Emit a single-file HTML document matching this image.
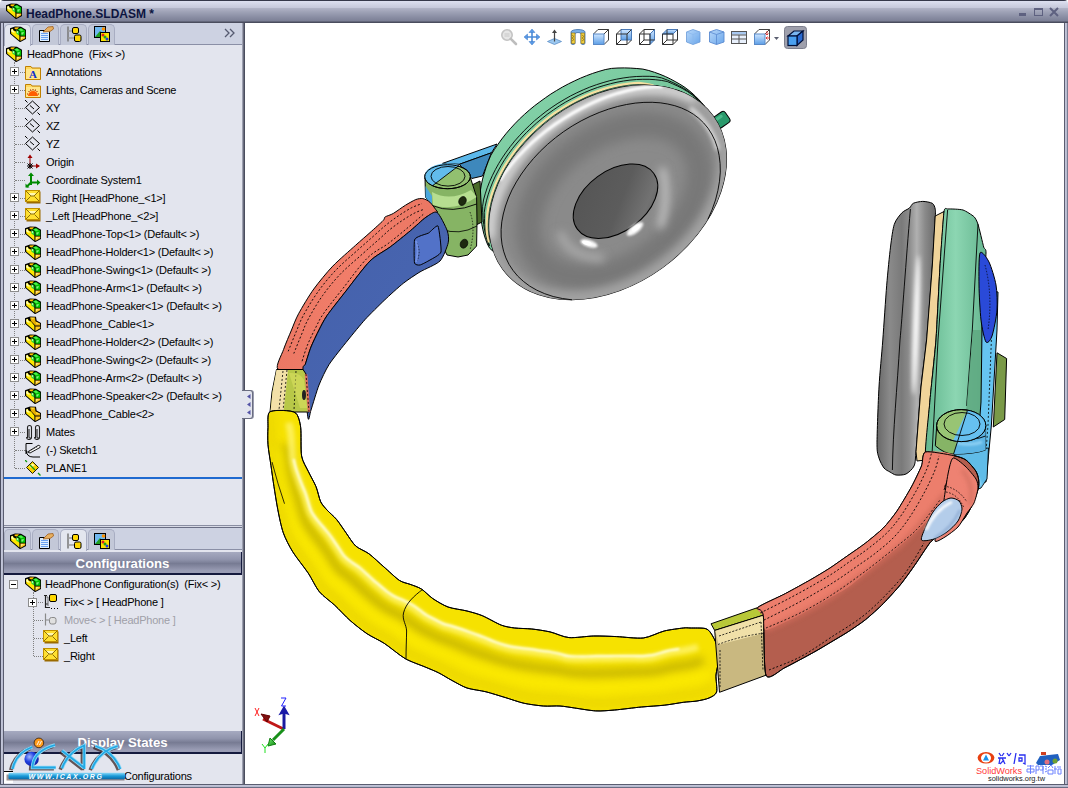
<!DOCTYPE html>
<html><head><meta charset="utf-8">
<style>
*{margin:0;padding:0;box-sizing:border-box}
html,body{width:1068px;height:788px;overflow:hidden;background:#fff}
body{position:relative;font-family:"Liberation Sans",sans-serif;font-size:11px;color:#000}
.a{position:absolute}
svg.a{overflow:visible}
#title{left:0;top:0;width:1068px;height:23px;background:linear-gradient(#35384a 0,#35384a 1px,#dde0f0 1px,#d2d5e6 4px,#c6c9db 7.5px,#afb2c5 8.5px,#9ea2b6 12px,#8a8ea4 17px,#7c8096 21px,#4a4d5e 22px,#4a4d5e 23px);border-radius:4px 4px 0 0}
#title .t{left:26px;top:7px;font-weight:bold;font-size:12px;color:#0d1440}
#lb{left:0;top:23px;width:4px;height:765px;background:linear-gradient(90deg,#4a4d60 0,#4a4d60 1px,#c4c7da 1px,#b8bcd0 3px,#5a5d70 3px)}
#panel{left:4px;top:23px;width:238px;height:761px;background:#e3e5ee}
#pr{left:242px;top:23px;width:3px;height:761px;background:linear-gradient(90deg,#b0b3c3,#8a8d9e 1px,#4a4d5e 2px)}
#bb{left:0;top:784px;width:1068px;height:4px;background:linear-gradient(#5a5d70 0,#5a5d70 1px,#c4c7da 1px,#b4b8cc 3px,#6a6e84 3px)}
#rb{left:1064px;top:23px;width:4px;height:765px;background:linear-gradient(90deg,#5a5d70 0,#5a5d70 1px,#c4c7da 1px,#b4b8cc 3px,#7a7e94 3px)}
.tabs{left:4px;width:238px;height:22px;background:#cdd2e2;border-bottom:1px solid #8a8fa6}
.tab{position:absolute;width:27px;height:21px;border-radius:5px 5px 0 0;background:#c3c8d8;border:1px solid #a8adc2;border-bottom:none}
.tab.on{background:#e3e6ef;height:22px}
.row{position:absolute;white-space:pre;line-height:13px;height:13px;letter-spacing:-0.22px}
.hdr{left:4px;width:238px;height:23px;background:linear-gradient(#a6aac0,#9195ad 35%,#777b93 55%,#9a9db5 90%);border-bottom:2px solid #151a3e;border-right:1px solid #151a3e;color:#fff;font-weight:bold;font-size:13.2px;text-align:center;line-height:23px}
#view{left:245px;top:23px;width:819px;height:761px;background:#fff;overflow:hidden}

</style></head><body>
<svg width="0" height="0" style="position:absolute">
<symbol id="i-asm" viewBox="0 0 16 16">
 <path d="M0 2.2 L5 0.4 L11 0.8 L16.2 3.8 L16.2 12.8 L10 16.2 L0 7.8Z" fill="#000"/>
 <path d="M1.2 3.4 L2.8 2.8 L3.6 4.6 L6 5.6 L9.4 9.8 L9.4 14.6 L1.2 7.4Z" fill="#ffe600"/>
 <path d="M1.2 3.6 L2.6 3.1 L3.2 4.8 L5 6.5 L3 6.5 L1.2 5.5Z" fill="#ffffb0"/>
 <path d="M4.6 1.4 L9 1.3 L7.2 3.6 L4.6 3Z" fill="#ffc400"/>
 <path d="M6.4 4 L9.4 5.8 L9.4 9.6 L6.4 7.8Z" fill="#30d830"/>
 <path d="M6.8 4.8 L8 5.6 L8 7.2 L6.8 6.6Z" fill="#c0ffc0"/>
 <path d="M7.4 3.2 L11 1.9 L15.2 4.4 L15.2 9.8 L10.4 9.8 L10.4 5.9Z" fill="#00c000"/>
 <path d="M8.6 3.4 L11 2.6 L13.6 4.2 L11.2 5.2Z" fill="#50ee50"/>
 <path d="M11.4 6.6 L14 6 L13 8.4 L11.4 8.6Z" fill="#a0ffa0" opacity="0.8"/>
 <path d="M10.4 10.6 L15.2 10.6 L15.2 12.3 L10.4 15Z" fill="#ffc820"/>
 <path d="M11 11.2 L14 11.2 L11 13Z" fill="#ffeea0"/>
</symbol>
<symbol id="i-part" viewBox="0 0 16 16">
 <path d="M0 2.2 L5 0.4 L11 0.8 L11.6 4.5 L16.2 7 L16.2 12.8 L10 16.2 L0 7.8Z" fill="#000"/>
 <path d="M1.2 3.4 L2.8 2.8 L3.6 4.6 L6 5.6 L9.4 9.8 L9.4 14.6 L1.2 7.4Z" fill="#ffe600"/>
 <path d="M1.2 3.6 L2.6 3.1 L3.2 4.8 L5 6.5 L3 6.5 L1.2 5.5Z" fill="#ffffb0"/>
 <path d="M5 1.4 L10 1.5 L10.4 5.2 L15 7.6 L15.2 9.6 L10.4 9.6 L6 5Z" fill="#e8b000"/>
 <path d="M5.4 1.6 L9.6 1.7 L7.6 3.6Z M10.8 6 L14.8 7.8 L11.4 8.4Z" fill="#ffd840"/>
 <path d="M10.4 10.4 L15.2 10.4 L15.2 12.3 L10.4 15Z" fill="#ffc820"/>
</symbol>
<symbol id="i-plane" viewBox="0 0 16 16">
 <path d="M7.5 1 L14.5 7.5 L7.5 14 L0.5 7.5Z" fill="none" stroke="#000" stroke-width="1"/>
 <path d="M0 0 L2.5 2.5 M5 5.5 L9 9 M12.5 12.5 L15 15" stroke="#000" stroke-width="1"/>
</symbol>
<symbol id="i-folderA" viewBox="0 0 16 16">
 <path d="M0.5 2.5 L6 2.5 L7 4 L15.5 4 L15.5 15.5 L0.5 15.5Z" fill="#ffd860" stroke="#c08000" stroke-width="1"/>
 <path d="M1 5 L15 5 L15 15 L1 15Z" fill="#ffe68a"/>
 <text x="8" y="14" font-family="Liberation Serif" font-weight="bold" font-size="11" fill="#1030d0" text-anchor="middle">A</text>
</symbol>
<symbol id="i-folderL" viewBox="0 0 16 16">
 <path d="M0.5 2.5 L6 2.5 L7 4 L15.5 4 L15.5 15.5 L0.5 15.5Z" fill="#ffd860" stroke="#c08000" stroke-width="1"/>
 <path d="M1 5 L15 5 L15 15 L1 15Z" fill="#ffe68a"/>
 <path d="M3 14 A5 5 0 0 1 13 14Z" fill="#ff6000"/>
 <path d="M8 7 L8 8.5 M3.5 9 L4.5 10 M12.5 9 L11.5 10 M2 12 L3 12 M13 12 L14 12 M5.5 7.5 L6 9 M10.5 7.5 L10 9" stroke="#a02000" stroke-width="1"/>
</symbol>
<symbol id="i-origin" viewBox="0 0 16 16">
 <path d="M5 14 L5 2" stroke="#900000" stroke-width="1"/>
 <path d="M2.5 4 L5 0.5 L7.5 4Z" fill="#a00000"/>
 <path d="M5 12 L14 12" stroke="#900000" stroke-width="1"/>
 <path d="M11 9.5 L15 12 L11 14.5Z" fill="#a00000"/>
 <path d="M2.5 9.5 L7.5 14.5 M7.5 9.5 L2.5 14.5 M5 9 L5 15 M2 12 L8 12" stroke="#000" stroke-width="1"/>
</symbol>
<symbol id="i-coord" viewBox="0 0 16 16">
 <path d="M6 13 L6 3 M6 10.5 L14 10.5 M6 10.5 L1.5 15" stroke="#008a00" stroke-width="2"/>
 <path d="M3 4 L6 0.5 L9 4Z M12 7.5 L15.5 10.5 L12 13.5Z M0.5 11.5 L0.5 15.5 L4.5 15.5Z" fill="#008a00"/>
</symbol>
<symbol id="i-env" viewBox="0 0 16 16">
 <rect x="1.5" y="1.5" width="14" height="12" fill="#9a6a00"/>
 <rect x="0.5" y="0.5" width="14" height="11" fill="#ffe030" stroke="#c09000" stroke-width="1"/>
 <path d="M3 3 L11 3 L9 6 L5 6Z" fill="#fff8b0"/>
 <path d="M1 1 L6 6 L9 6 L14 1 M1 11 L5.5 6.5 M14 11 L9.5 6.5" stroke="#806000" stroke-width="0.9" fill="none"/>
</symbol>
<symbol id="i-mates" viewBox="0 0 16 16">
 <path d="M2.5 14 L2.5 3.5 A2 2 0 0 1 6.5 3.5 L6.5 13 A1.2 1.2 0 0 1 4 13 L4 5" fill="none" stroke="#222" stroke-width="1.1"/>
 <path d="M10.5 14 L10.5 3.5 A2 2 0 0 1 14.5 3.5 L14.5 13 A1.2 1.2 0 0 1 12 13 L12 5" fill="none" stroke="#222" stroke-width="1.1"/>
 <path d="M1.5 13 A2.5 2.5 0 0 0 6.5 13 M9.5 13 A2.5 2.5 0 0 0 14.5 13" fill="none" stroke="#222" stroke-width="1.1"/>
</symbol>
<symbol id="i-sketch" viewBox="0 0 16 16">
 <path d="M1 12 L1 1.5 L7.5 1.5 M1 8 Q1.5 15 8 15 L15 15" fill="none" stroke="#000" stroke-width="1"/>
 <path d="M2.5 10 L13 3.5 A1.5 1.5 0 0 1 15 5.5 L5 11Z" fill="#fff" stroke="#000" stroke-width="0.9"/>
 <path d="M4 9.5 L13 4.5" stroke="#000" stroke-width="0.6" stroke-dasharray="1 1"/>
</symbol>
<symbol id="i-plane1" viewBox="0 0 16 16">
 <path d="M7.5 1.5 L13.5 7.5 L7.5 13.5 L1.5 7.5Z" fill="#f8d000" stroke="#202000" stroke-width="1"/>
 <path d="M4 6 L7.5 3.5 L10 5 L6 8Z" fill="#fff8a0"/>
 <path d="M0 0 L2 2 M5 5 L10 10 M13 13 L15.5 15.5" stroke="#119911" stroke-width="1.3"/>
</symbol>
<symbol id="i-plus" viewBox="0 0 9 9">
 <rect x="0.5" y="0.5" width="8" height="8" fill="#fff" stroke="#8c8c8c" stroke-width="1"/>
 <path d="M2 4.5 L7 4.5 M4.5 2 L4.5 7" stroke="#000" stroke-width="1"/>
</symbol>
<symbol id="i-minus" viewBox="0 0 9 9">
 <rect x="0.5" y="0.5" width="8" height="8" fill="#fff" stroke="#8c8c8c" stroke-width="1"/>
 <path d="M2 4.5 L7 4.5" stroke="#000" stroke-width="1"/>
</symbol>
<symbol id="i-cfg" viewBox="0 0 16 16">
 <path d="M1 1.5 L4 1.5 M2.5 1.5 L2.5 13.5 L7 13.5 M2.5 10 L5 10" fill="none" stroke="#222" stroke-width="1.2"/>
 <path d="M3.5 3 L5 3 L5 12" fill="none" stroke="#666" stroke-width="1"/>
 <rect x="6.5" y="0.5" width="7" height="7" rx="1.5" fill="#ffd800" stroke="#000" stroke-width="1"/>
 <path d="M8 14.5 h1 M11 14.5 h1 M14 14.5 h1" stroke="#000" stroke-width="1.2"/>
</symbol>
<symbol id="i-cfg2" viewBox="0 0 16 16">
 <path d="M2.5 1.5 L2.5 13.5 M2.5 8 L6 8" fill="none" stroke="#8a8a8a" stroke-width="1.2"/>
 <rect x="6.5" y="5.5" width="6.5" height="6.5" rx="2" fill="#e0e0e0" stroke="#8a8a8a" stroke-width="1"/>
</symbol>
<symbol id="i-tab2" viewBox="0 0 16 16">
 <path d="M1.5 4.5 L11.5 4.5 L11.5 15.5 L1.5 15.5Z" fill="#ddeeff" stroke="#000" stroke-width="1"/>
 <path d="M3 7.5 h7 M3 9.5 h7 M3 11.5 h7 M3 13.5 h7" stroke="#6aa0f0" stroke-width="1"/>
 <path d="M5 6 L10 1 L15 0.5 L15.5 3 L12 5.5Z" fill="#e8b060" stroke="#a06020" stroke-width="0.8"/>
</symbol>
<symbol id="i-tab3" viewBox="0 0 16 16">
 <path d="M2 0.5 L2 15.5" stroke="#777" stroke-width="1.5"/>
 <path d="M2 5 L7 5 M2 12 L8 12" stroke="#999" stroke-width="1.5"/>
 <rect x="6.5" y="1.5" width="6" height="6" rx="1.5" fill="#ffd800" stroke="#000" stroke-width="1"/>
 <rect x="8.5" y="9" width="6.5" height="6.5" rx="1.5" fill="#ffd800" stroke="#000" stroke-width="1"/>
</symbol>
<symbol id="i-tab4" viewBox="0 0 16 16">
 <rect x="0.5" y="0.5" width="11" height="11" fill="#70b8f0" stroke="#000" stroke-width="1"/>
 <path d="M1 11 L6 5 L11 11Z" fill="#20a020"/>
 <circle cx="9.5" cy="3" r="1.8" fill="#ff9000"/>
 <rect x="6.5" y="6.5" width="9" height="9" fill="#f8e000" stroke="#000" stroke-width="1"/>
 <circle cx="9" cy="9" r="1.5" fill="#e02020"/><circle cx="11" cy="11" r="1.5" fill="#20a020"/><circle cx="13" cy="13" r="1.5" fill="#2040e0"/>
</symbol>
</svg>
<div id="title" class="a"><svg class="a" style="left:6px;top:3px" width="16" height="16"><use href="#i-asm"/></svg><span class="a t">HeadPhone.SLDASM *</span>
<div class="a" style="left:1019px;top:13px;width:7px;height:3px;background:#5e6180"></div>
<div class="a" style="left:1034px;top:8px;width:9px;height:8px;border:1px solid #5e6180;border-top-width:2px"></div>
<svg class="a" style="left:1049px;top:7px" width="10" height="10"><path d="M1 1 L9 9 M9 1 L1 9" stroke="#5e6180" stroke-width="2"/></svg>
</div>
<div id="lb" class="a"></div>
<div id="panel" class="a"></div>
<div id="pr" class="a"></div>
<div id="rb" class="a"></div>
<div id="bb" class="a"></div>
<div class="a tabs" style="top:23px"></div>
<div class="tab on" style="left:4px;top:24px"></div>
<svg class="a" style="left:10px;top:26px" width="16" height="16"><use href="#i-asm"/></svg>
<div class="tab" style="left:32px;top:24px"></div>
<svg class="a" style="left:38px;top:26px" width="16" height="16"><use href="#i-tab2"/></svg>
<div class="tab" style="left:60px;top:24px"></div>
<svg class="a" style="left:66px;top:26px" width="16" height="16"><use href="#i-tab3"/></svg>
<div class="tab" style="left:88px;top:24px"></div>
<svg class="a" style="left:94px;top:26px" width="16" height="16"><use href="#i-tab4"/></svg>
<svg class="a" style="left:224px;top:28px" width="12" height="10"><path d="M1 1 L5 5 L1 9 M6 1 L10 5 L6 9" fill="none" stroke="#555a70" stroke-width="1.3"/></svg>
<div class="a" style="left:14px;top:62px;width:1px;height:406px;border-left:1px dotted #808080"></div>
<svg class="a" style="left:6px;top:46px" width="16" height="16"><use href="#i-asm"/></svg>
<div class="row " style="left:27px;top:48px">HeadPhone  (Fix&lt; &gt;)</div>
<div class="a" style="left:15px;top:72px;width:10px;height:1px;border-top:1px dotted #808080"></div>
<svg class="a" style="left:10px;top:67px" width="9" height="9"><use href="#i-plus"/></svg>
<svg class="a" style="left:25px;top:64px" width="16" height="16"><use href="#i-folderA"/></svg>
<div class="row " style="left:46px;top:66px">Annotations</div>
<div class="a" style="left:15px;top:90px;width:10px;height:1px;border-top:1px dotted #808080"></div>
<svg class="a" style="left:10px;top:85px" width="9" height="9"><use href="#i-plus"/></svg>
<svg class="a" style="left:25px;top:82px" width="16" height="16"><use href="#i-folderL"/></svg>
<div class="row " style="left:46px;top:84px">Lights, Cameras and Scene</div>
<div class="a" style="left:15px;top:108px;width:10px;height:1px;border-top:1px dotted #808080"></div>
<svg class="a" style="left:25px;top:100px" width="16" height="16"><use href="#i-plane"/></svg>
<div class="row " style="left:46px;top:102px">XY</div>
<div class="a" style="left:15px;top:126px;width:10px;height:1px;border-top:1px dotted #808080"></div>
<svg class="a" style="left:25px;top:118px" width="16" height="16"><use href="#i-plane"/></svg>
<div class="row " style="left:46px;top:120px">XZ</div>
<div class="a" style="left:15px;top:144px;width:10px;height:1px;border-top:1px dotted #808080"></div>
<svg class="a" style="left:25px;top:136px" width="16" height="16"><use href="#i-plane"/></svg>
<div class="row " style="left:46px;top:138px">YZ</div>
<div class="a" style="left:15px;top:162px;width:10px;height:1px;border-top:1px dotted #808080"></div>
<svg class="a" style="left:25px;top:154px" width="16" height="16"><use href="#i-origin"/></svg>
<div class="row " style="left:46px;top:156px">Origin</div>
<div class="a" style="left:15px;top:180px;width:10px;height:1px;border-top:1px dotted #808080"></div>
<svg class="a" style="left:25px;top:172px" width="16" height="16"><use href="#i-coord"/></svg>
<div class="row " style="left:46px;top:174px">Coordinate System1</div>
<div class="a" style="left:15px;top:198px;width:10px;height:1px;border-top:1px dotted #808080"></div>
<svg class="a" style="left:10px;top:193px" width="9" height="9"><use href="#i-plus"/></svg>
<svg class="a" style="left:25px;top:190px" width="16" height="16"><use href="#i-env"/></svg>
<div class="row " style="left:46px;top:192px">_Right [HeadPhone_&lt;1&gt;]</div>
<div class="a" style="left:15px;top:216px;width:10px;height:1px;border-top:1px dotted #808080"></div>
<svg class="a" style="left:10px;top:211px" width="9" height="9"><use href="#i-plus"/></svg>
<svg class="a" style="left:25px;top:208px" width="16" height="16"><use href="#i-env"/></svg>
<div class="row " style="left:46px;top:210px">_Left [HeadPhone_&lt;2&gt;]</div>
<div class="a" style="left:15px;top:234px;width:10px;height:1px;border-top:1px dotted #808080"></div>
<svg class="a" style="left:10px;top:229px" width="9" height="9"><use href="#i-plus"/></svg>
<svg class="a" style="left:25px;top:226px" width="16" height="16"><use href="#i-asm"/></svg>
<div class="row " style="left:46px;top:228px">HeadPhone-Top&lt;1&gt; (Default&lt; &gt;)</div>
<div class="a" style="left:15px;top:252px;width:10px;height:1px;border-top:1px dotted #808080"></div>
<svg class="a" style="left:10px;top:247px" width="9" height="9"><use href="#i-plus"/></svg>
<svg class="a" style="left:25px;top:244px" width="16" height="16"><use href="#i-asm"/></svg>
<div class="row " style="left:46px;top:246px">HeadPhone-Holder&lt;1&gt; (Default&lt; &gt;)</div>
<div class="a" style="left:15px;top:270px;width:10px;height:1px;border-top:1px dotted #808080"></div>
<svg class="a" style="left:10px;top:265px" width="9" height="9"><use href="#i-plus"/></svg>
<svg class="a" style="left:25px;top:262px" width="16" height="16"><use href="#i-asm"/></svg>
<div class="row " style="left:46px;top:264px">HeadPhone-Swing&lt;1&gt; (Default&lt; &gt;)</div>
<div class="a" style="left:15px;top:288px;width:10px;height:1px;border-top:1px dotted #808080"></div>
<svg class="a" style="left:10px;top:283px" width="9" height="9"><use href="#i-plus"/></svg>
<svg class="a" style="left:25px;top:280px" width="16" height="16"><use href="#i-asm"/></svg>
<div class="row " style="left:46px;top:282px">HeadPhone-Arm&lt;1&gt; (Default&lt; &gt;)</div>
<div class="a" style="left:15px;top:306px;width:10px;height:1px;border-top:1px dotted #808080"></div>
<svg class="a" style="left:10px;top:301px" width="9" height="9"><use href="#i-plus"/></svg>
<svg class="a" style="left:25px;top:298px" width="16" height="16"><use href="#i-asm"/></svg>
<div class="row " style="left:46px;top:300px">HeadPhone-Speaker&lt;1&gt; (Default&lt; &gt;)</div>
<div class="a" style="left:15px;top:324px;width:10px;height:1px;border-top:1px dotted #808080"></div>
<svg class="a" style="left:10px;top:319px" width="9" height="9"><use href="#i-plus"/></svg>
<svg class="a" style="left:25px;top:316px" width="16" height="16"><use href="#i-part"/></svg>
<div class="row " style="left:46px;top:318px">HeadPhone_Cable&lt;1&gt;</div>
<div class="a" style="left:15px;top:342px;width:10px;height:1px;border-top:1px dotted #808080"></div>
<svg class="a" style="left:10px;top:337px" width="9" height="9"><use href="#i-plus"/></svg>
<svg class="a" style="left:25px;top:334px" width="16" height="16"><use href="#i-asm"/></svg>
<div class="row " style="left:46px;top:336px">HeadPhone-Holder&lt;2&gt; (Default&lt; &gt;)</div>
<div class="a" style="left:15px;top:360px;width:10px;height:1px;border-top:1px dotted #808080"></div>
<svg class="a" style="left:10px;top:355px" width="9" height="9"><use href="#i-plus"/></svg>
<svg class="a" style="left:25px;top:352px" width="16" height="16"><use href="#i-asm"/></svg>
<div class="row " style="left:46px;top:354px">HeadPhone-Swing&lt;2&gt; (Default&lt; &gt;)</div>
<div class="a" style="left:15px;top:378px;width:10px;height:1px;border-top:1px dotted #808080"></div>
<svg class="a" style="left:10px;top:373px" width="9" height="9"><use href="#i-plus"/></svg>
<svg class="a" style="left:25px;top:370px" width="16" height="16"><use href="#i-asm"/></svg>
<div class="row " style="left:46px;top:372px">HeadPhone-Arm&lt;2&gt; (Default&lt; &gt;)</div>
<div class="a" style="left:15px;top:396px;width:10px;height:1px;border-top:1px dotted #808080"></div>
<svg class="a" style="left:10px;top:391px" width="9" height="9"><use href="#i-plus"/></svg>
<svg class="a" style="left:25px;top:388px" width="16" height="16"><use href="#i-asm"/></svg>
<div class="row " style="left:46px;top:390px">HeadPhone-Speaker&lt;2&gt; (Default&lt; &gt;)</div>
<div class="a" style="left:15px;top:414px;width:10px;height:1px;border-top:1px dotted #808080"></div>
<svg class="a" style="left:10px;top:409px" width="9" height="9"><use href="#i-plus"/></svg>
<svg class="a" style="left:25px;top:406px" width="16" height="16"><use href="#i-part"/></svg>
<div class="row " style="left:46px;top:408px">HeadPhone_Cable&lt;2&gt;</div>
<div class="a" style="left:15px;top:432px;width:10px;height:1px;border-top:1px dotted #808080"></div>
<svg class="a" style="left:10px;top:427px" width="9" height="9"><use href="#i-plus"/></svg>
<svg class="a" style="left:25px;top:424px" width="16" height="16"><use href="#i-mates"/></svg>
<div class="row " style="left:46px;top:426px">Mates</div>
<div class="a" style="left:15px;top:450px;width:10px;height:1px;border-top:1px dotted #808080"></div>
<svg class="a" style="left:25px;top:442px" width="16" height="16"><use href="#i-sketch"/></svg>
<div class="row " style="left:46px;top:444px">(-) Sketch1</div>
<div class="a" style="left:15px;top:468px;width:10px;height:1px;border-top:1px dotted #808080"></div>
<svg class="a" style="left:25px;top:460px" width="16" height="16"><use href="#i-plane1"/></svg>
<div class="row " style="left:46px;top:462px">PLANE1</div>
<div class="a" style="left:4px;top:477px;width:238px;height:2px;background:#1f6ad0"></div>
<div class="a" style="left:4px;top:525px;width:238px;height:1px;background:#8a8ea2"></div>
<div class="a" style="left:4px;top:526px;width:238px;height:1px;background:#d8dae6"></div>
<div class="a" style="left:4px;top:527px;width:238px;height:1px;background:#6a6e84"></div>
<div class="a tabs" style="top:528px"></div>
<div class="tab" style="left:4px;top:529px"></div>
<svg class="a" style="left:10px;top:533px" width="16" height="16"><use href="#i-asm"/></svg>
<div class="tab" style="left:32px;top:529px"></div>
<svg class="a" style="left:38px;top:533px" width="16" height="16"><use href="#i-tab2"/></svg>
<div class="tab on" style="left:60px;top:529px"></div>
<svg class="a" style="left:66px;top:533px" width="16" height="16"><use href="#i-tab3"/></svg>
<div class="tab" style="left:88px;top:529px"></div>
<svg class="a" style="left:94px;top:533px" width="16" height="16"><use href="#i-tab4"/></svg>
<div class="a hdr" style="top:552px">Configurations</div>
<div class="a" style="left:33px;top:592px;width:1px;height:64px;border-left:1px dotted #808080"></div>
<svg class="a" style="left:9px;top:580px" width="9" height="9"><use href="#i-minus"/></svg>
<svg class="a" style="left:25px;top:576px" width="16" height="16"><use href="#i-asm"/></svg>
<div class="row " style="left:45px;top:578px">HeadPhone Configuration(s)  (Fix&lt; &gt;)</div>
<div class="a" style="left:34px;top:602px;width:9px;height:1px;border-top:1px dotted #808080"></div>
<svg class="a" style="left:28px;top:598px" width="9" height="9"><use href="#i-plus"/></svg>
<svg class="a" style="left:43px;top:594px" width="16" height="16"><use href="#i-cfg"/></svg>
<div class="row " style="left:64px;top:596px">Fix&lt; &gt; [ HeadPhone ]</div>
<div class="a" style="left:34px;top:620px;width:9px;height:1px;border-top:1px dotted #808080"></div>
<svg class="a" style="left:43px;top:612px" width="16" height="16"><use href="#i-cfg2"/></svg>
<div class="row " style="left:64px;top:614px;color:#a0a0a8">Move&lt; &gt; [ HeadPhone ]</div>
<div class="a" style="left:34px;top:638px;width:9px;height:1px;border-top:1px dotted #808080"></div>
<svg class="a" style="left:43px;top:630px" width="16" height="16"><use href="#i-env"/></svg>
<div class="row " style="left:64px;top:632px">_Left</div>
<div class="a" style="left:34px;top:656px;width:9px;height:1px;border-top:1px dotted #808080"></div>
<svg class="a" style="left:43px;top:648px" width="16" height="16"><use href="#i-env"/></svg>
<div class="row " style="left:64px;top:650px">_Right</div>
<div class="a hdr" style="top:731px">Display States</div>
<div class="row" style="left:124px;top:770px">Configurations</div>
<div class="a" id="white-box-bottom" style="left:4px;top:771px;width:9px;height:12px;background:#fff;border-top:1px solid #000"></div>
<div id="view" class="a"></div>
<div class="a" id="collapse-tab" style="left:242px;top:390px;width:11px;height:29px;background:#e3e5ee;border:1px solid #6a6d80;border-left:none;border-radius:0 3px 3px 0;box-shadow:1px 0 0 #9a9db0"></div>
<svg class="a" style="left:246px;top:392px" width="6" height="25"><path d="M1 4.5 L4.5 2 L4.5 7Z M1 12.5 L4.5 10 L4.5 15Z M1 20.5 L4.5 18 L4.5 23Z" fill="#5454a6"/></svg>
<svg class="a" style="left:0;top:0" width="1068" height="788">
<defs>
 <linearGradient id="gHous" x1="0" y1="0" x2="1" y2="1"><stop offset="0" stop-color="#8ad6ae"/><stop offset="0.6" stop-color="#72c498"/><stop offset="1" stop-color="#5aa880"/></linearGradient>
 <radialGradient id="gTor" cx="0.55" cy="0.42" r="0.62"><stop offset="0" stop-color="#7a7a7a"/><stop offset="0.35" stop-color="#8c8c8c"/><stop offset="0.7" stop-color="#7c7c7c"/><stop offset="0.92" stop-color="#8e8e8e"/><stop offset="1" stop-color="#6a6a6a"/></radialGradient>
 <linearGradient id="gHole" x1="0" y1="0" x2="1" y2="1"><stop offset="0" stop-color="#505050"/><stop offset="0.6" stop-color="#666"/><stop offset="1" stop-color="#5a5a5a"/></linearGradient>
 <linearGradient id="gYel" x1="0" y1="0" x2="0" y2="1"><stop offset="0" stop-color="#f8e400"/><stop offset="1" stop-color="#e8d000"/></linearGradient>
 <linearGradient id="gSal" x1="0" y1="0" x2="1" y2="0"><stop offset="0" stop-color="#ec7864"/><stop offset="0.5" stop-color="#f27e6a"/><stop offset="1" stop-color="#ea7662"/></linearGradient>
 <linearGradient id="gBlue" x1="0" y1="0" x2="1" y2="1"><stop offset="0" stop-color="#4460aa"/><stop offset="1" stop-color="#4a68b4"/></linearGradient>
 <linearGradient id="gCush" x1="0" y1="0" x2="1" y2="0"><stop offset="0" stop-color="#686868"/><stop offset="0.22" stop-color="#8a8a8a"/><stop offset="0.42" stop-color="#7a7a7a"/><stop offset="0.55" stop-color="#8c8c8c"/><stop offset="0.68" stop-color="#b0b0b0"/><stop offset="0.82" stop-color="#8a8a8a"/><stop offset="1" stop-color="#6a6a6a"/></linearGradient>
 <linearGradient id="gHous2" x1="0" y1="0" x2="1" y2="0"><stop offset="0" stop-color="#62b68e"/><stop offset="0.5" stop-color="#8cd6b2"/><stop offset="1" stop-color="#66b690"/></linearGradient>
 <filter id="blur2" x="-50%" y="-50%" width="200%" height="200%"><feGaussianBlur stdDeviation="2"/></filter>
 <filter id="blur4" x="-50%" y="-50%" width="200%" height="200%"><feGaussianBlur stdDeviation="4"/></filter>
 <filter id="blur6" x="-50%" y="-50%" width="200%" height="200%"><feGaussianBlur stdDeviation="6"/></filter>
</defs>

<path d="M442.5 163.4 L497.0 144.0 L491.4 152.8 L459.4 164.3Z" fill="#5cb8ea" stroke="#000" stroke-width="1"/>
<path d="M459.4 164.3 L491.4 152.8 L482.5 176.0 L471.8 178.5Z" fill="#3e88bc" stroke="#000" stroke-width="1"/>
<path d="M493.5 251.7 L489.6 248.2 L487.4 244.0 L485.6 239.4 L484.1 234.7 L482.9 229.8 L481.9 224.7 L481.2 219.5 L480.4 214.0 L479.9 208.5 L479.8 202.7 L479.9 196.9 L480.3 191.0 L481.3 185.0 L482.6 179.1 L484.3 173.1 L486.2 167.1 L488.4 161.2 L490.9 155.2 L494.3 149.7 L498.0 144.3 L501.8 139.0 L505.9 133.8 L510.2 128.8 L514.7 123.9 L519.4 119.1 L524.3 114.5 L529.3 110.1 L534.5 105.8 L539.9 101.8 L545.4 97.8 L550.9 94.0 L556.6 90.5 L562.4 87.1 L568.4 83.9 L574.3 81.0 L580.4 78.2 L586.5 75.7 L592.7 73.4 L598.9 71.4 L605.2 69.6 L611.6 68.4 L618.0 68.0 L624.4 67.9 L630.7 68.1 L636.8 68.5 L642.9 69.1 L648.8 70.5 L654.5 72.3 L660.0 74.3 L665.3 76.5 L670.3 78.9 L675.1 81.5 L679.7 84.1 L684.0 86.8 L688.1 89.8 L691.9 92.9 L695.4 96.2 L698.7 99.5 L701.8 102.8 L704.6 106.3 L704.6 106.3 L694.1 98.2 L681.9 92.0 L668.3 87.8 L653.5 85.6 L637.8 85.4 L621.5 87.4 L605.0 91.4 L588.5 97.4 L572.4 105.2 L557.0 114.7 L542.6 125.8 L529.4 138.1 L517.8 151.5 L507.9 165.7 L500.0 180.4 L494.2 195.3 L490.6 210.2 L489.3 224.8 L490.2 238.7 L493.5 251.7Z" fill="url(#gHous)" stroke="#000" stroke-width="1"/>
<g transform="rotate(-35 722 120)"><rect x="714" y="113" width="15" height="13" rx="3" fill="#2a9a6c" stroke="#000" stroke-width="1"/><rect x="716" y="115" width="9" height="3" rx="1.5" fill="#5ac898" opacity="0.7"/></g>
<path d="M489.2 246.0 L487.3 240.9 L485.8 235.6 L484.6 230.1 L483.7 224.4 L483.1 218.5 L482.7 212.5 L482.6 206.3 L483.5 200.0 L485.2 193.9 L487.2 187.8 L489.6 181.7 L492.3 175.7 L495.3 169.7 L498.6 163.7 L502.2 157.9 L506.1 152.2 L510.3 146.5 L514.7 141.0 L519.4 135.7 L524.3 130.5 L529.4 125.5 L534.7 120.6 L540.3 116.0 L546.0 111.5 L551.9 107.3 L557.9 103.3 L564.1 99.6 L570.4 96.0 L576.8 92.8 L583.3 89.8 L589.8 87.1 L596.5 84.7 L603.1 82.6 L609.8 80.7 L616.4 79.2 L623.1 78.0 L629.7 77.1 L636.3 76.5 L642.8 76.3 L649.2 76.3 L655.5 76.7 L661.6 77.9 L667.4 80.1 L673.0 82.6 L678.2 85.2 L683.2 88.0 L687.9 91.0 L692.3 94.3 L696.3 97.8 L700.1 101.3" fill="none" stroke="#000" stroke-width="0.9"/>
<path d="M489.7 245.8 L487.9 240.8 L486.6 235.5 L485.5 230.1 L484.8 224.4 L484.4 218.6 L484.2 212.7 L485.1 206.7 L486.4 200.8 L488.1 194.8 L490.1 188.8 L492.4 182.9 L495.0 176.9 L498.0 171.1 L501.2 165.3 L504.7 159.5 L508.5 153.9 L512.6 148.4 L517.0 143.0 L521.6 137.7 L526.4 132.6 L531.5 127.7 L536.7 122.9 L542.2 118.3 L547.8 113.9 L553.6 109.8 L559.5 105.8 L565.6 102.1 L571.8 98.7 L578.1 95.5 L584.5 92.6 L590.9 89.9 L597.4 87.5 L603.9 85.5 L610.5 83.7 L617.0 82.2 L623.5 81.0 L630.0 80.1 L636.5 79.5 L642.8 79.3 L649.1 79.3 L655.2 79.7 L661.3 80.4 L667.2 81.5 L672.6 83.8 L677.9 86.2 L682.9 88.8 L687.6 91.6 L692.0 94.7 L696.1 98.1 L700.0 101.5" fill="none" stroke="#000" stroke-width="0.9"/>
<path d="M489.1 242.4 L488.1 238.3 L487.2 234.0 L486.7 229.6 L486.7 225.2 L486.8 220.7 L487.2 216.1 L487.7 211.5 L488.5 206.9 L489.6 202.3 L490.8 197.6 L492.2 193.0 L493.9 188.3 L495.7 183.6 L497.8 179.0 L500.1 174.4 L502.5 169.8 L505.1 165.3 L508.0 160.8 L511.0 156.4 L514.1 152.0 L517.5 147.7 L521.0 143.5 L524.6 139.4 L528.4 135.4 L532.4 131.5 L536.5 127.6 L540.7 123.9 L545.0 120.4 L549.5 116.9 L554.0 113.6 L558.7 110.5 L563.4 107.4 L568.2 104.6 L573.1 101.9 L578.0 99.3 L583.0 96.9 L588.1 94.7 L593.2 92.7 L598.3 90.8 L603.4 89.2 L608.5 87.7 L613.7 86.4 L618.8 85.3 L623.9 84.4 L629.0 83.6 L634.0 83.1 L639.1 83.0 L644.0 83.7 L648.8 84.5 L653.5 85.6" fill="none" stroke="#f4e0a0" stroke-width="2.4"/>
<path d="M490.2 242.2 L489.3 238.1 L488.7 233.9 L488.3 229.6 L488.3 225.2 L488.4 220.8 L488.8 216.3 L489.3 211.8 L490.1 207.2 L491.1 202.7 L492.3 198.1 L493.8 193.5 L495.4 188.9 L497.2 184.3 L499.3 179.7 L501.5 175.1 L503.9 170.6 L506.5 166.1 L509.3 161.7 L512.3 157.3 L515.4 153.0 L518.7 148.7 L522.2 144.6 L525.8 140.5 L529.6 136.5 L533.5 132.6 L537.6 128.8 L541.7 125.2 L546.0 121.6 L550.4 118.2 L554.9 114.9 L559.5 111.8 L564.2 108.8 L569.0 106.0 L573.8 103.3 L578.7 100.8 L583.7 98.4 L588.7 96.2 L593.7 94.2 L598.8 92.4 L603.9 90.7 L609.0 89.2 L614.0 87.9 L619.1 86.8 L624.2 85.9 L629.2 85.2 L634.2 84.7 L639.1 84.5 L644.0 84.6 L648.8 85.0 L653.5 85.6" fill="none" stroke="#000" stroke-width="0.6"/>
<clipPath id="cTor"><ellipse cx="607.9" cy="192.5" rx="130.2" ry="92.9" transform="rotate(-36 607.9 192.5)"/></clipPath>
<ellipse cx="607.9" cy="192.5" rx="130.2" ry="92.9" transform="rotate(-36 607.9 192.5)" fill="#8a8a8a" stroke="#000" stroke-width="1"/>
<defs><filter id="fb2" filterUnits="userSpaceOnUse" x="0" y="0" width="1068" height="788"><feGaussianBlur stdDeviation="2"/></filter><filter id="fb4" filterUnits="userSpaceOnUse" x="0" y="0" width="1068" height="788"><feGaussianBlur stdDeviation="4"/></filter><filter id="fb6" filterUnits="userSpaceOnUse" x="0" y="0" width="1068" height="788"><feGaussianBlur stdDeviation="6"/></filter><filter id="fb1" filterUnits="userSpaceOnUse" x="0" y="0" width="1068" height="788"><feGaussianBlur stdDeviation="1.2"/></filter></defs>
<g clip-path="url(#cTor)"><ellipse cx="614" cy="201" rx="95" ry="64" transform="rotate(-36 614 201)" fill="none" stroke="#787878" stroke-width="26" filter="url(#fb6)"/><ellipse cx="607.9" cy="192.5" rx="130.2" ry="92.9" transform="rotate(-36 607.9 192.5)" fill="none" stroke="#a2a2a2" stroke-width="16" filter="url(#fb4)"/><path d="M490.2 238.7 L490.0 230.4 L490.7 221.9 L492.1 213.3 L494.4 204.6 L497.4 196.0 L501.1 187.4 L505.5 178.9 L510.6 170.6 L516.4 162.4 L522.7 154.4 L529.6 146.8 L537.1 139.4 L544.9 132.5 L553.2 125.9 L561.8 119.8 L570.8 114.2 L579.9 109.1 L589.2 104.6 L598.7 100.6 L608.2 97.2 L617.7 94.4 L627.1 92.2 L636.5 90.6 L645.7 89.7 L654.7 89.5 L663.5 90.0 L672.0 91.2 L680.2 93.1 L688.1 95.7 L695.5 99.1" fill="none" stroke="#e0e0e0" stroke-width="8" filter="url(#fb4)"/><path d="M500.0 180.4 L505.3 172.3 L511.2 164.5 L517.7 156.9 L524.6 149.7 L531.9 142.7 L539.5 136.1 L547.5 129.7 L555.8 123.8 L564.3 118.2 L573.0 112.9 L581.8 108.1 L590.7 103.7 L599.7 99.7 L608.8 96.2 L617.9 93.2 L627.0 90.7 L636.1 88.7 L645.1 87.4 L654.1 86.7 L662.9 86.7" fill="none" stroke="#fff" stroke-width="3" filter="url(#fb1)"/><path d="M662 168 Q670 195 660 228" fill="none" stroke="#cacaca" stroke-width="6" filter="url(#fb4)"/><path d="M690 108 Q712 125 718 150" fill="none" stroke="#e8e8e8" stroke-width="4" filter="url(#fb2)"/><path d="M560 232 Q568 258 604 258" fill="none" stroke="#a8a8a8" stroke-width="8" filter="url(#fb4)"/></g>
<path d="M572.0 299.8 L562.4 298.5 L553.2 296.5 L544.7 293.7 L536.8 290.2 L529.7 286.1 L523.3 281.3 L517.7 276.1 L513.0 270.4 L509.0 264.3 L505.9 257.9 L503.6 251.2 L502.0 244.2 L501.2 237.0 L501.1 229.5 L501.8 221.8 L503.3 214.0 L505.5 206.0 L508.4 198.0 L512.0 189.9 L516.4 181.9 L521.4 174.0 L527.1 166.2 L533.4 158.6 L540.2 151.3 L547.6 144.3 L555.4 137.8 L563.7 131.6 L572.2 126.0 L581.1 120.9 L590.1 116.4 L599.2 112.5 L608.4 109.2 L617.5 106.5 L626.5 104.5 L635.3 103.1 L643.9 102.4 L652.2 102.3 L660.2 102.8 L667.7 104.0 L674.8 105.7 L681.5 108.0 L687.8 110.9 L693.5 114.3 L698.8 118.3 L703.6 122.9 L708.0 128.2 L711.7 134.0 L714.9 140.5 L717.4 147.6 L719.1 155.3 L720.1 163.5 L720.3 172.1 L719.5 181.2 L717.9 190.5 L715.5 200.0 L712.1 209.7 L707.9 219.3" fill="none" stroke="#000" stroke-width="0.9"/>
<defs><linearGradient id="gHole2" x1="0" y1="0" x2="1" y2="1"><stop offset="0" stop-color="#545454"/><stop offset="0.55" stop-color="#5c5c5c"/><stop offset="0.8" stop-color="#727272"/><stop offset="1" stop-color="#5e5e5e"/></linearGradient></defs>
<ellipse cx="615.5" cy="201.2" rx="47.3" ry="30.4" transform="rotate(-36.2 615.5 201.2)" fill="url(#gHole2)" stroke="#000" stroke-width="1"/>
<ellipse cx="589" cy="243.5" rx="9" ry="3.5" fill="#fff" opacity="0.95" filter="url(#fb1)" transform="rotate(18 589 243.5)"/>
<ellipse cx="635" cy="229" rx="10" ry="4" fill="#fff" opacity="0.95" filter="url(#fb1)" transform="rotate(-38 635 229)"/>
<ellipse cx="587" cy="243" rx="5" ry="2" fill="#fff" transform="rotate(18 587 243)"/>
<ellipse cx="636" cy="228" rx="5" ry="2.2" fill="#fff" transform="rotate(-38 636 228)"/>
<path d="M470.0 186.0 L480.0 181.0 L482.0 222.0 L474.0 226.0Z" fill="#4a6a2a" stroke="#000" stroke-width="1"/>
<path d="M425.0 178.0 L425.5 197.0 L432.0 206.0 L438.0 218.0 L441.0 229.0 L442.0 245.0 L447.0 255.0 L458.0 257.0 L468.0 255.0 L476.6 246.0 L477.0 222.0 L476.6 197.0 L470.5 178.0Z" fill="#86b464" stroke="#000" stroke-width="1"/>
<path d="M425.5 186 L425.5 197 L432 206 L432 196Z" fill="#4aa6dc"/>
<path d="M432 192 Q450 202 471 190 L476.6 197 Q455 212 433 205Z" fill="#b6de90"/>
<path d="M432 205.5 Q452 214 476.6 204" fill="none" stroke="#000" stroke-width="0.9"/>
<path d="M441 229 Q459 236 477 226" fill="none" stroke="#000" stroke-width="0.8"/>
<path d="M470 212 Q476 228 470 250" fill="none" stroke="#000" stroke-width="0.7" stroke-dasharray="1.5 1.5"/>
<ellipse cx="447.6" cy="176.7" rx="22.8" ry="12" fill="#92c070" stroke="#000" stroke-width="1"/>
<path d="M459.4 165.2 A22.8 12 0 0 0 424.8 176.7 A22.8 12 0 0 0 432.8 185.5 Z" fill="#62bcec"/>
<ellipse cx="447.6" cy="176.7" rx="22.8" ry="12" fill="none" stroke="#000" stroke-width="1"/>
<ellipse cx="448" cy="176.3" rx="17" ry="9.8" fill="none" stroke="#000" stroke-width="0.9"/>
<path d="M459.4 165.2 L432.8 185.5" fill="none" stroke="#000" stroke-width="0.9"/>
<ellipse cx="462.5" cy="201" rx="3.6" ry="4.6" fill="#1e2a10" stroke="#000" stroke-width="0.6" transform="rotate(25 462.5 201)"/>
<ellipse cx="464" cy="243.7" rx="3.6" ry="4.6" fill="#1e2a10" stroke="#000" stroke-width="0.6" transform="rotate(25 464 243.7)"/>
<path d="M277.8 369.0 C275.2 366.3 281.8 354.6 283.6 349.4 C285.4 344.2 289.5 334.8 291.5 330.0 C293.5 325.2 295.6 319.2 298.6 313.7 C301.6 308.2 309.2 295.3 313.8 289.0 C318.4 282.7 327.2 271.9 332.8 266.1 C338.4 260.3 350.7 249.7 355.7 245.2 C360.7 240.7 366.3 235.9 370.0 232.6 C373.7 229.3 381.2 222.6 383.2 220.5 C385.2 218.4 383.8 217.8 385.2 216.9 C386.6 216.0 390.7 215.0 393.4 213.4 C396.1 211.8 402.5 207.0 405.5 205.2 C408.5 203.4 413.4 200.5 415.7 199.6 C418.0 198.7 420.9 198.3 422.8 198.6 C424.7 198.9 428.0 200.5 429.9 202.2 C431.8 203.9 436.1 210.0 437.0 211.3 C437.9 212.6 438.5 211.5 437.0 212.3 C435.5 213.1 429.3 215.0 425.8 217.4 C422.3 219.8 415.3 226.7 410.6 230.6 C405.9 234.5 395.7 242.8 390.3 246.9 C384.9 251.0 375.9 255.1 370.0 261.0 C364.1 266.9 351.7 283.7 346.0 291.0 C340.3 298.3 330.6 310.4 327.0 315.6 C323.4 320.8 321.1 325.8 319.0 330.0 C316.9 334.2 312.8 342.4 311.0 347.0 C309.2 351.6 306.4 361.2 305.3 364.3 C304.2 367.4 306.7 369.4 303.0 370.0 C299.3 370.6 280.4 371.7 277.8 369.0Z" fill="url(#gSal)" stroke="#000" stroke-width="1"/>
<path d="M288.2 351.3 C289.5 348.1 293.6 337.8 296.1 331.9 C298.6 326.1 299.4 322.8 303.0 316.1 C306.6 309.4 312.3 299.7 317.9 291.9 C323.4 284.2 329.5 276.7 336.4 269.6 C343.3 262.4 352.9 254.5 359.0 248.9 C365.2 243.4 368.8 240.3 373.3 236.3 C377.8 232.3 381.9 228.3 386.2 224.9 C390.4 221.4 394.6 218.5 398.8 215.6 C403.0 212.8 407.5 209.9 411.3 207.9 C415.2 205.9 420.1 204.3 421.9 203.6" fill="none" stroke="#000" stroke-width="0.9" stroke-dasharray="2 2"/>
<path d="M293.8 353.5 C295.1 350.3 299.2 340.0 301.6 334.3 C304.1 328.5 304.7 325.4 308.3 319.0 C311.8 312.5 317.3 303.0 322.7 295.4 C328.1 287.9 334.0 280.7 340.7 273.7 C347.5 266.7 357.0 258.9 363.1 253.4 C369.2 247.9 372.8 244.8 377.3 240.8 C381.8 236.9 385.8 232.9 389.9 229.5 C394.1 226.2 398.1 223.3 402.1 220.6 C406.2 217.9 410.4 215.2 414.1 213.3 C417.8 211.3 422.5 209.9 424.2 209.2" fill="none" stroke="#000" stroke-width="0.9" stroke-dasharray="2 2"/>
<path d="M437.0 212.3 C434.5 210.8 428.9 215.3 425.8 217.4 C422.7 219.5 414.7 227.2 410.6 230.6 C406.5 234.0 395.0 243.4 390.3 246.9 C385.6 250.4 375.2 255.9 370.0 261.0 C364.8 266.1 351.0 284.6 346.0 291.0 C341.0 297.4 330.1 311.1 327.0 315.6 C323.9 320.2 320.9 326.3 319.0 330.0 C317.1 333.7 312.6 343.0 311.0 347.0 C309.4 351.0 306.2 361.6 305.3 364.3 C304.4 367.0 302.7 363.7 303.0 370.0 C303.3 376.3 307.1 413.3 308.0 418.0 C308.9 422.7 309.7 413.9 311.0 410.0 C312.3 406.1 316.9 390.3 319.0 385.0 C321.1 379.7 325.8 369.6 329.2 364.3 C332.6 359.1 343.8 345.2 348.0 340.0 C352.2 334.8 361.0 324.0 365.2 319.4 C369.4 314.8 379.8 304.6 384.2 300.4 C388.6 296.2 399.1 286.6 403.3 283.3 C407.5 280.0 415.7 274.5 420.0 271.9 C424.3 269.3 436.7 264.4 440.0 261.0 C443.3 257.6 447.4 246.3 448.2 242.8 C449.0 239.3 448.5 234.2 447.2 230.6 C445.9 227.0 439.5 213.8 437.0 212.3Z" fill="url(#gBlue)" stroke="#000" stroke-width="1"/>
<path d="M423.2 214.4 C420.7 216.6 413.9 222.6 408.0 227.5 C402.2 232.4 394.7 238.6 387.9 243.7 C381.1 248.8 374.7 250.7 367.2 258.2 C359.7 265.6 350.1 279.3 342.9 288.5 C335.6 297.7 328.3 306.7 323.7 313.3 C319.1 319.9 318.2 322.8 315.4 328.2 C312.7 333.5 309.6 339.7 307.3 345.5 C305.0 351.3 302.5 360.1 301.5 363.0" fill="none" stroke="#000" stroke-width="0.9" stroke-dasharray="2 2"/>
<path d="M414.5 240.0 C415.0 237.8 418.8 236.6 420.0 236.0 C421.2 235.4 427.1 233.8 428.6 233.0 C430.1 232.2 437.0 224.4 438.0 226.0 C439.0 227.6 441.7 249.2 441.0 252.0 C440.3 254.8 431.8 258.9 430.0 260.0 C428.2 261.1 421.3 264.8 420.0 265.0 C418.7 265.2 415.0 265.1 414.5 263.0 C414.0 260.9 414.0 242.2 414.5 240.0Z" fill="#5272c8" stroke="#000" stroke-width="1"/>
<path d="M417 243 Q421 252 417 261" fill="none" stroke="#000" stroke-width="0.8" stroke-dasharray="1.5 1.5"/>
<path d="M416 241 Q419 250 416 262" fill="none" stroke="#7a98e8" stroke-width="2" opacity="0.8"/>
<path d="M276.5 369.5 L303.0 369.5 L306.0 374.0 L309.0 412.0 L270.0 412.0 L272.0 392.0Z" fill="#b8c848" stroke="#000" stroke-width="1"/>
<path d="M276.5 370.0 L288.0 370.0 L283.6 411.5 L270.5 411.5 L272.5 392.0Z" fill="#f2e0a8" stroke="none"/>
<path d="M287 370 L283 411 M283 371 L279 410 M296 371 L294 410" fill="none" stroke="#000" stroke-width="0.8" stroke-dasharray="2 2"/>
<path d="M289 373 Q300 372 304 380 L307 408 L300 408 Z" fill="#d8e060" opacity="0.6"/>
<ellipse cx="304" cy="395" rx="2" ry="5" fill="#222"/>
<path d="M306 374 L309 412" stroke="#e07060" stroke-width="2.5"/>
<path d="M306 374 L309 412" stroke="#000" stroke-width="0.8" stroke-dasharray="2 2"/>
<path d="M269.3 412.4 C267.2 414.7 268.2 423.3 268.0 427.6 C267.8 431.9 267.6 439.6 268.0 444.7 C268.4 449.8 270.2 460.1 271.0 465.7 C271.8 471.3 273.1 480.8 274.0 486.6 C274.9 492.4 276.6 503.3 277.8 509.5 C279.0 515.7 281.3 527.1 283.3 532.8 C285.3 538.5 289.5 546.6 292.8 551.9 C296.1 557.2 304.4 567.5 308.0 572.8 C311.6 578.1 315.9 587.6 319.5 591.9 C323.1 596.2 330.6 601.4 334.7 605.2 C338.8 609.0 345.7 616.6 350.0 620.4 C354.3 624.2 362.4 630.6 367.0 633.7 C371.6 636.8 379.1 640.0 384.2 643.3 C389.3 646.6 399.5 655.3 405.0 658.5 C410.5 661.7 420.7 665.1 425.2 667.0 C429.7 668.9 435.0 671.0 438.6 672.8 C442.2 674.6 448.1 678.4 451.9 680.4 C455.7 682.4 462.5 686.5 467.0 688.0 C471.5 689.5 480.9 690.5 486.0 691.8 C491.1 693.1 500.1 696.0 505.2 697.5 C510.3 699.0 519.1 702.2 524.2 703.3 C529.3 704.4 538.5 705.6 543.3 706.0 C548.1 706.4 555.8 705.7 560.0 706.0 C564.2 706.3 569.9 707.3 574.7 708.0 C579.5 708.7 590.4 710.6 595.7 710.9 C601.0 711.2 608.6 710.5 614.7 710.0 C620.8 709.5 634.8 707.6 641.4 707.0 C648.0 706.4 658.6 705.8 664.2 705.2 C669.8 704.6 678.9 702.9 683.3 702.3 C687.7 701.7 693.6 701.6 697.0 701.0 C700.4 700.4 706.4 699.2 709.0 698.0 C711.6 696.8 715.7 695.1 716.6 692.0 C717.5 688.9 715.7 679.3 716.0 675.0 C716.3 670.7 718.5 664.0 718.6 660.0 C718.7 656.0 717.6 648.3 716.6 644.7 C715.6 641.1 712.5 635.5 711.0 633.3 C709.5 631.1 708.0 629.2 705.2 628.5 C702.4 627.8 692.9 628.1 690.0 628.0 C687.1 627.9 686.7 627.6 683.3 628.0 C679.9 628.4 669.5 629.7 664.2 631.0 C658.9 632.3 649.6 637.3 643.3 638.0 C637.0 638.7 623.2 636.9 616.6 636.6 C610.0 636.3 600.1 635.9 593.8 636.0 C587.5 636.1 574.8 638.1 569.0 637.6 C563.2 637.1 555.0 633.0 550.0 631.9 C545.0 630.8 536.5 629.5 531.8 629.0 C527.1 628.5 518.8 628.5 514.7 628.0 C510.6 627.5 505.7 626.8 501.4 625.2 C497.1 623.6 486.9 617.6 482.3 615.7 C477.7 613.8 471.6 612.2 467.0 611.0 C462.4 609.8 452.6 608.7 448.0 607.0 C443.4 605.3 436.3 601.0 432.8 598.6 C429.3 596.2 424.4 590.9 421.4 589.0 C418.4 587.1 412.9 585.4 410.0 584.3 C407.1 583.2 402.9 582.7 399.4 580.4 C395.9 578.1 388.1 570.5 384.0 567.0 C379.9 563.5 372.8 556.6 369.0 553.8 C365.2 551.0 358.8 548.8 355.7 546.0 C352.6 543.2 348.5 536.3 346.0 532.8 C343.5 529.3 339.1 522.5 336.6 519.5 C334.1 516.5 329.1 512.4 327.0 510.0 C324.9 507.6 322.2 504.9 320.7 501.8 C319.2 498.7 317.7 490.7 316.0 486.6 C314.3 482.5 310.2 475.5 308.3 471.4 C306.4 467.3 302.6 461.8 301.6 456.0 C300.6 450.2 301.4 433.3 300.7 427.6 C300.0 421.9 298.3 415.6 296.0 413.3 C293.7 411.0 287.1 410.6 283.5 410.5 C279.9 410.4 271.4 410.1 269.3 412.4Z" fill="#f6e200" stroke="#000" stroke-width="1"/>
<clipPath id="cYel"><path d="M269.3 412.4 C267.2 414.7 268.2 423.3 268.0 427.6 C267.8 431.9 267.6 439.6 268.0 444.7 C268.4 449.8 270.2 460.1 271.0 465.7 C271.8 471.3 273.1 480.8 274.0 486.6 C274.9 492.4 276.6 503.3 277.8 509.5 C279.0 515.7 281.3 527.1 283.3 532.8 C285.3 538.5 289.5 546.6 292.8 551.9 C296.1 557.2 304.4 567.5 308.0 572.8 C311.6 578.1 315.9 587.6 319.5 591.9 C323.1 596.2 330.6 601.4 334.7 605.2 C338.8 609.0 345.7 616.6 350.0 620.4 C354.3 624.2 362.4 630.6 367.0 633.7 C371.6 636.8 379.1 640.0 384.2 643.3 C389.3 646.6 399.5 655.3 405.0 658.5 C410.5 661.7 420.7 665.1 425.2 667.0 C429.7 668.9 435.0 671.0 438.6 672.8 C442.2 674.6 448.1 678.4 451.9 680.4 C455.7 682.4 462.5 686.5 467.0 688.0 C471.5 689.5 480.9 690.5 486.0 691.8 C491.1 693.1 500.1 696.0 505.2 697.5 C510.3 699.0 519.1 702.2 524.2 703.3 C529.3 704.4 538.5 705.6 543.3 706.0 C548.1 706.4 555.8 705.7 560.0 706.0 C564.2 706.3 569.9 707.3 574.7 708.0 C579.5 708.7 590.4 710.6 595.7 710.9 C601.0 711.2 608.6 710.5 614.7 710.0 C620.8 709.5 634.8 707.6 641.4 707.0 C648.0 706.4 658.6 705.8 664.2 705.2 C669.8 704.6 678.9 702.9 683.3 702.3 C687.7 701.7 693.6 701.6 697.0 701.0 C700.4 700.4 706.4 699.2 709.0 698.0 C711.6 696.8 715.7 695.1 716.6 692.0 C717.5 688.9 715.7 679.3 716.0 675.0 C716.3 670.7 718.5 664.0 718.6 660.0 C718.7 656.0 717.6 648.3 716.6 644.7 C715.6 641.1 712.5 635.5 711.0 633.3 C709.5 631.1 708.0 629.2 705.2 628.5 C702.4 627.8 692.9 628.1 690.0 628.0 C687.1 627.9 686.7 627.6 683.3 628.0 C679.9 628.4 669.5 629.7 664.2 631.0 C658.9 632.3 649.6 637.3 643.3 638.0 C637.0 638.7 623.2 636.9 616.6 636.6 C610.0 636.3 600.1 635.9 593.8 636.0 C587.5 636.1 574.8 638.1 569.0 637.6 C563.2 637.1 555.0 633.0 550.0 631.9 C545.0 630.8 536.5 629.5 531.8 629.0 C527.1 628.5 518.8 628.5 514.7 628.0 C510.6 627.5 505.7 626.8 501.4 625.2 C497.1 623.6 486.9 617.6 482.3 615.7 C477.7 613.8 471.6 612.2 467.0 611.0 C462.4 609.8 452.6 608.7 448.0 607.0 C443.4 605.3 436.3 601.0 432.8 598.6 C429.3 596.2 424.4 590.9 421.4 589.0 C418.4 587.1 412.9 585.4 410.0 584.3 C407.1 583.2 402.9 582.7 399.4 580.4 C395.9 578.1 388.1 570.5 384.0 567.0 C379.9 563.5 372.8 556.6 369.0 553.8 C365.2 551.0 358.8 548.8 355.7 546.0 C352.6 543.2 348.5 536.3 346.0 532.8 C343.5 529.3 339.1 522.5 336.6 519.5 C334.1 516.5 329.1 512.4 327.0 510.0 C324.9 507.6 322.2 504.9 320.7 501.8 C319.2 498.7 317.7 490.7 316.0 486.6 C314.3 482.5 310.2 475.5 308.3 471.4 C306.4 467.3 302.6 461.8 301.6 456.0 C300.6 450.2 301.4 433.3 300.7 427.6 C300.0 421.9 298.3 415.6 296.0 413.3 C293.7 411.0 287.1 410.6 283.5 410.5 C279.9 410.4 271.4 410.1 269.3 412.4Z"/></clipPath>
<g clip-path="url(#cYel)"><path d="M270.7 412.2 C270.7 413.8 270.7 418.6 270.8 421.9 C270.8 425.2 270.9 428.5 271.0 431.9 C271.0 435.3 271.0 438.9 271.2 442.3 C271.5 445.7 272.1 449.2 272.6 452.6 C273.0 456.0 273.5 459.5 273.9 462.9 C274.4 466.4 274.8 469.8 275.3 473.2 C275.8 476.7 276.3 480.1 276.9 483.5 C277.5 486.9 278.2 490.3 278.8 493.7 C279.4 497.1 280.0 500.5 280.8 503.9 C281.5 507.3 282.4 510.6 283.2 514.0 C284.0 517.3 284.7 520.8 285.7 524.1 C286.6 527.4 287.7 530.7 289.1 533.8 C290.5 537.0 292.2 540.0 293.9 543.0 C295.6 546.0 297.4 549.0 299.4 551.8 C301.3 554.7 303.5 557.4 305.5 560.2 C307.6 563.0 309.7 565.7 311.6 568.6 C313.6 571.5 315.3 574.5 317.1 577.5 C318.9 580.4 320.3 583.7 322.5 586.3 C324.7 589.0 327.6 591.0 330.2 593.3 C332.7 595.6 335.5 597.7 338.1 600.0 C340.6 602.4 343.0 604.9 345.5 607.3 C348.0 609.8 350.3 612.3 352.9 614.6 C355.5 616.9 358.3 618.9 361.1 621.1 C363.8 623.2 366.4 625.6 369.2 627.5 C372.1 629.5 375.2 631.1 378.2 632.8 C381.2 634.5 384.4 635.9 387.3 637.8 C390.2 639.6 393.0 641.7 395.8 643.7 C398.6 645.7 401.3 648.0 404.2 649.8 C407.1 651.7 410.2 653.3 413.3 654.8 C416.4 656.3 419.6 657.6 422.8 658.9 C426.0 660.3 429.2 661.7 432.3 663.1 C435.5 664.5 438.8 665.7 441.9 667.2 C445.0 668.7 447.9 670.5 451.0 672.1 C454.1 673.7 457.2 675.3 460.3 676.8 C463.4 678.3 466.5 679.9 469.7 681.0 C473.0 682.1 476.5 682.5 479.9 683.3 C483.2 684.1 486.6 684.9 489.9 685.8 C493.3 686.7 496.6 687.8 499.9 688.8 C503.2 689.7 506.5 690.7 509.9 691.7 C513.2 692.6 516.5 693.7 519.9 694.5 C523.2 695.3 526.6 696.0 530.0 696.6 C533.4 697.2 536.9 697.7 540.3 698.1 C543.8 698.4 547.2 698.4 550.7 698.6 C554.1 698.8 557.6 698.7 561.0 699.0 C564.5 699.3 567.9 700.1 571.3 700.6 C574.8 701.0 578.2 701.4 581.6 701.8 C585.1 702.3 588.5 702.9 591.9 703.1 C595.4 703.3 598.9 703.2 602.3 703.1 C605.8 703.0 609.3 702.9 612.7 702.7 C616.2 702.4 619.6 702.0 623.1 701.7 C626.5 701.3 630.0 701.0 633.4 700.6 C636.9 700.3 640.3 700.0 643.8 699.7 C647.2 699.5 650.7 699.3 654.1 699.0 C657.6 698.8 661.0 698.5 664.5 698.1 C667.9 697.6 671.3 696.9 674.7 696.3 C678.1 695.8 681.6 695.3 685.0 694.8 C688.4 694.4 691.9 694.3 695.3 693.7 C698.7 693.1 702.3 692.6 705.4 691.2 C708.5 689.9 712.5 686.5 713.9 685.6" fill="none" stroke="#e0cc00" stroke-width="8" opacity="0.5" filter="url(#fb4)"/><path d="M285.2 444.9 C285.3 446.5 285.8 451.3 286.1 454.5 C286.4 457.7 286.5 461.0 287.0 464.2 C287.4 467.4 288.1 470.5 288.9 473.6 C289.7 476.7 290.6 479.8 291.5 482.9 C292.4 486.0 293.3 489.0 294.3 492.1 C295.3 495.1 296.5 498.1 297.5 501.2 C298.4 504.3 299.1 507.4 300.1 510.5 C301.1 513.6 301.8 516.8 303.2 519.7 C304.6 522.6 306.5 525.3 308.3 527.9 C310.1 530.6 312.1 533.1 314.0 535.6 C316.0 538.2 318.2 540.6 320.1 543.2 C322.1 545.7 323.9 548.4 325.8 551.1 C327.6 553.7 329.3 556.5 331.1 559.2 C332.9 561.9 334.3 564.9 336.4 567.3 C338.5 569.7 341.2 571.6 343.7 573.6 C346.2 575.6 349.0 577.2 351.5 579.3 C354.0 581.3 356.3 583.7 358.6 585.9 C361.0 588.1 363.3 590.4 365.7 592.5 C368.1 594.7 370.7 596.7 373.2 598.7 C375.7 600.8 378.1 603.0 380.7 604.9 C383.3 606.8 386.1 608.4 388.9 610.0 C391.7 611.5 394.8 612.6 397.6 614.1 C400.5 615.6 403.3 617.2 406.0 618.9 C408.7 620.6 411.2 622.7 413.9 624.5 C416.5 626.3 419.1 628.2 421.9 629.8 C424.7 631.4 427.8 632.6 430.7 634.0 C433.6 635.4 436.4 637.0 439.4 638.2 C442.4 639.4 445.5 640.2 448.6 641.3 C451.6 642.4 454.5 643.6 457.5 644.8 C460.5 646.0 463.4 647.3 466.4 648.5 C469.4 649.7 472.4 651.0 475.4 652.0 C478.5 653.1 481.5 654.0 484.6 655.0 C487.6 656.1 490.6 657.2 493.7 658.2 C496.8 659.2 499.8 660.1 503.0 661.0 C506.1 661.9 509.2 662.7 512.4 663.4 C515.5 664.1 518.7 664.7 521.8 665.2 C525.0 665.7 528.2 666.2 531.4 666.6 C534.6 667.1 537.8 667.7 541.0 668.1 C544.2 668.5 547.5 668.7 550.6 669.0 C553.8 669.4 557.0 669.8 560.2 670.4 C563.3 671.0 566.5 671.9 569.7 672.4 C572.8 672.8 576.1 672.9 579.3 673.1 C582.5 673.3 585.7 673.5 588.9 673.5 C592.2 673.6 595.4 673.3 598.6 673.3 C601.9 673.2 605.1 673.2 608.3 673.1 C611.6 673.0 614.8 672.8 618.0 672.7 C621.2 672.6 624.5 672.4 627.7 672.3 C630.9 672.2 634.2 672.1 637.4 672.0 C640.6 671.9 643.9 672.0 647.1 671.8 C650.3 671.6 653.5 671.4 656.7 670.8 C659.8 670.3 662.9 669.3 666.1 668.6 C669.2 667.9 672.4 667.1 675.5 666.5 C678.7 666.0 682.0 665.8 685.1 665.2 C688.3 664.7 691.6 664.1 694.7 663.3 C697.7 662.4 701.9 660.5 703.3 660.0" fill="none" stroke="#b0a000" stroke-width="9" opacity="0.65" filter="url(#fb4)"/><path d="M278.9 448.7 C279.1 450.4 279.6 455.4 280.0 458.7 C280.4 462.0 280.7 465.4 281.1 468.7 C281.6 472.0 282.2 475.3 282.9 478.5 C283.6 481.8 284.4 485.0 285.2 488.3 C285.9 491.5 286.7 494.8 287.5 498.0 C288.4 501.2 289.4 504.4 290.3 507.6 C291.2 510.8 291.9 514.1 292.9 517.3 C293.8 520.5 294.8 523.7 296.2 526.7 C297.5 529.8 299.3 532.7 301.1 535.5 C302.8 538.3 304.7 541.0 306.7 543.7 C308.7 546.4 310.8 549.0 312.8 551.7 C314.8 554.4 316.8 557.1 318.7 559.8 C320.6 562.6 322.3 565.5 324.1 568.3 C325.9 571.2 327.3 574.3 329.5 576.8 C331.6 579.3 334.4 581.3 336.9 583.4 C339.5 585.6 342.3 587.5 344.8 589.7 C347.3 591.9 349.6 594.3 352.1 596.6 C354.5 598.9 356.8 601.4 359.3 603.6 C361.8 605.8 364.5 607.8 367.1 609.9 C369.7 612.0 372.2 614.3 375.0 616.2 C377.7 618.1 380.6 619.7 383.5 621.4 C386.5 623.0 389.6 624.3 392.5 625.9 C395.4 627.6 398.1 629.4 400.9 631.3 C403.7 633.2 406.3 635.3 409.1 637.2 C411.8 639.0 414.6 640.8 417.6 642.3 C420.5 643.9 423.7 645.1 426.7 646.5 C429.8 647.9 432.8 649.3 435.9 650.6 C439.0 651.9 442.2 653.0 445.2 654.3 C448.3 655.6 451.2 657.1 454.2 658.5 C457.3 659.9 460.3 661.3 463.4 662.6 C466.4 664.0 469.4 665.4 472.6 666.5 C475.7 667.6 479.0 668.3 482.2 669.2 C485.4 670.1 488.6 671.0 491.8 672.0 C495.0 672.9 498.2 674.0 501.4 674.9 C504.6 675.8 507.9 676.7 511.1 677.5 C514.4 678.4 517.6 679.2 520.9 679.8 C524.1 680.5 527.4 681.1 530.7 681.6 C534.0 682.2 537.3 682.7 540.7 683.1 C544.0 683.4 547.3 683.6 550.7 683.8 C554.0 684.1 557.3 684.3 560.6 684.7 C563.9 685.1 567.2 686.0 570.5 686.5 C573.8 686.9 577.1 687.2 580.5 687.5 C583.8 687.8 587.1 688.2 590.4 688.3 C593.8 688.4 597.1 688.2 600.5 688.2 C603.8 688.1 607.2 688.1 610.5 687.9 C613.9 687.7 617.2 687.4 620.5 687.2 C623.9 686.9 627.2 686.7 630.5 686.5 C633.9 686.2 637.2 686.0 640.6 685.9 C643.9 685.7 647.3 685.7 650.6 685.4 C653.9 685.2 657.3 684.9 660.6 684.4 C663.9 684.0 667.1 683.1 670.4 682.5 C673.7 681.9 677.0 681.2 680.3 680.7 C683.6 680.2 686.9 680.0 690.2 679.5 C693.5 678.9 697.0 678.4 700.0 677.3 C703.1 676.1 707.2 673.5 708.6 672.8" fill="none" stroke="#fff000" stroke-width="9" opacity="0.6" filter="url(#fb4)"/><path d="M288.7 422.6 C289.0 424.1 290.1 428.6 290.6 431.7 C291.1 434.7 291.2 437.9 291.5 441.0 C291.7 444.1 291.9 447.2 292.1 450.3 C292.3 453.4 292.3 456.6 292.8 459.6 C293.2 462.7 294.0 465.7 294.9 468.7 C295.7 471.6 296.8 474.5 297.9 477.5 C298.9 480.4 300.0 483.3 301.1 486.2 C302.2 489.1 303.6 491.9 304.6 494.8 C305.6 497.7 306.4 500.8 307.3 503.7 C308.3 506.7 308.9 509.8 310.3 512.6 C311.6 515.4 313.6 517.9 315.5 520.4 C317.3 522.8 319.4 525.1 321.4 527.5 C323.4 529.9 325.5 532.2 327.4 534.7 C329.3 537.1 331.0 539.7 332.8 542.3 C334.6 544.9 336.3 547.5 338.1 550.0 C339.8 552.6 341.3 555.5 343.4 557.8 C345.5 560.0 348.0 561.8 350.5 563.7 C352.9 565.6 355.8 567.0 358.2 568.9 C360.7 570.8 362.9 573.1 365.2 575.2 C367.5 577.3 369.7 579.4 372.1 581.5 C374.4 583.6 376.9 585.5 379.2 587.5 C381.6 589.6 383.9 591.7 386.4 593.6 C388.9 595.4 391.5 597.1 394.2 598.6 C397.0 600.0 400.0 600.9 402.8 602.3 C405.6 603.6 408.4 604.9 411.1 606.5 C413.7 608.1 416.2 610.0 418.7 611.8 C421.2 613.6 423.6 615.7 426.2 617.3 C428.9 618.9 431.8 620.1 434.6 621.5 C437.4 622.9 440.1 624.6 443.0 625.7 C445.8 626.9 448.9 627.4 451.9 628.3 C454.9 629.2 457.8 630.2 460.7 631.2 C463.7 632.2 466.6 633.3 469.5 634.4 C472.4 635.4 475.4 636.5 478.3 637.6 C481.2 638.6 484.0 639.8 486.9 640.9 C489.8 642.1 492.6 643.4 495.6 644.4 C498.5 645.4 501.5 646.3 504.5 647.1 C507.5 648.0 510.5 648.7 513.6 649.3 C516.7 649.8 519.7 650.1 522.8 650.5 C525.9 650.9 529.0 651.2 532.1 651.7 C535.2 652.1 538.3 652.7 541.4 653.1 C544.4 653.5 547.6 653.8 550.6 654.3 C553.7 654.8 556.7 655.4 559.7 656.1 C562.8 656.8 565.8 657.9 568.8 658.3 C571.9 658.7 575.0 658.6 578.1 658.7 C581.2 658.8 584.3 658.8 587.4 658.7 C590.5 658.7 593.7 658.4 596.8 658.4 C599.9 658.3 603.0 658.4 606.1 658.4 C609.3 658.4 612.4 658.3 615.5 658.2 C618.6 658.2 621.7 658.1 624.8 658.1 C628.0 658.1 631.1 658.1 634.2 658.1 C637.3 658.1 640.5 658.3 643.5 658.2 C646.6 658.0 649.7 657.8 652.8 657.2 C655.8 656.6 658.8 655.6 661.8 654.8 C664.8 654.0 667.7 653.0 670.8 652.4 C673.8 651.8 677.0 651.5 680.1 651.0 C683.1 650.5 686.3 649.9 689.3 649.3 C692.2 648.7 696.5 647.5 698.0 647.2" fill="none" stroke="#fff470" stroke-width="7" opacity="0.8" filter="url(#fb2)"/><path d="M293.6 459.0 C294.0 460.5 294.9 465.0 295.8 467.9 C296.7 470.9 297.8 473.8 298.8 476.7 C299.9 479.6 301.0 482.4 302.1 485.3 C303.3 488.1 304.6 490.9 305.7 493.8 C306.7 496.7 307.5 499.8 308.4 502.7 C309.3 505.7 310.0 508.8 311.3 511.5 C312.7 514.3 314.7 516.8 316.5 519.2 C318.4 521.7 320.5 523.9 322.5 526.3 C324.5 528.7 326.6 530.9 328.5 533.4 C330.4 535.8 332.1 538.4 333.9 541.0 C335.7 543.5 337.4 546.1 339.1 548.7 C340.9 551.2 342.4 554.1 344.4 556.3 C346.5 558.6 349.0 560.4 351.5 562.2 C353.9 564.1 356.8 565.5 359.2 567.4 C361.7 569.3 363.9 571.5 366.2 573.6 C368.5 575.6 370.7 577.8 373.0 579.8 C375.4 581.9 377.8 583.9 380.1 585.9 C382.5 587.9 384.8 590.0 387.3 591.9 C389.8 593.7 392.3 595.4 395.0 596.8 C397.7 598.3 400.8 599.2 403.6 600.5 C406.4 601.8 409.2 603.1 411.9 604.6 C414.5 606.2 416.9 608.1 419.4 609.9 C422.0 611.7 424.3 613.8 426.9 615.4 C429.5 617.1 432.4 618.3 435.2 619.7 C437.9 621.1 440.6 622.8 443.5 623.9 C446.4 625.0 449.5 625.5 452.4 626.4 C455.4 627.3 458.3 628.2 461.2 629.1 C464.1 630.1 467.0 631.2 469.9 632.3 C472.9 633.3 475.8 634.3 478.7 635.4 C481.6 636.5 484.4 637.7 487.3 638.8 C490.1 640.0 493.0 641.3 495.9 642.3 C498.8 643.4 501.7 644.3 504.7 645.1 C507.7 645.9 510.7 646.6 513.8 647.1 C516.8 647.7 519.9 648.0 523.0 648.3 C526.0 648.7 529.1 649.0 532.2 649.4 C535.3 649.8 538.3 650.4 541.4 650.8 C544.5 651.3 547.6 651.5 550.6 652.0 C553.7 652.6 556.7 653.3 559.7 653.9 C562.7 654.6 565.6 655.8 568.7 656.2 C571.7 656.6 574.8 656.5 577.9 656.5 C581.0 656.6 584.1 656.6 587.2 656.5 C590.3 656.4 593.4 656.2 596.5 656.1 C599.6 656.1 602.7 656.2 605.8 656.2 C608.9 656.1 612.0 656.1 615.1 656.0 C618.2 656.0 621.3 656.0 624.4 656.0 C627.5 656.0 630.6 656.0 633.7 656.0 C636.8 656.0 639.9 656.3 643.0 656.1 C646.1 656.0 649.2 655.7 652.2 655.2 C655.2 654.6 658.1 653.5 661.1 652.7 C664.1 651.9 667.1 650.9 670.1 650.3 C673.1 649.6 677.8 649.1 679.3 648.9" fill="none" stroke="#ffffe8" stroke-width="2.2" opacity="0.95" filter="url(#fb1)"/></g>
<path d="M269.3 412.4 C267.2 414.7 268.2 423.3 268.0 427.6 C267.8 431.9 267.6 439.6 268.0 444.7 C268.4 449.8 270.2 460.1 271.0 465.7 C271.8 471.3 273.1 480.8 274.0 486.6 C274.9 492.4 276.6 503.3 277.8 509.5 C279.0 515.7 281.3 527.1 283.3 532.8 C285.3 538.5 289.5 546.6 292.8 551.9 C296.1 557.2 304.4 567.5 308.0 572.8 C311.6 578.1 315.9 587.6 319.5 591.9 C323.1 596.2 330.6 601.4 334.7 605.2 C338.8 609.0 345.7 616.6 350.0 620.4 C354.3 624.2 362.4 630.6 367.0 633.7 C371.6 636.8 379.1 640.0 384.2 643.3 C389.3 646.6 399.5 655.3 405.0 658.5 C410.5 661.7 420.7 665.1 425.2 667.0 C429.7 668.9 435.0 671.0 438.6 672.8 C442.2 674.6 448.1 678.4 451.9 680.4 C455.7 682.4 462.5 686.5 467.0 688.0 C471.5 689.5 480.9 690.5 486.0 691.8 C491.1 693.1 500.1 696.0 505.2 697.5 C510.3 699.0 519.1 702.2 524.2 703.3 C529.3 704.4 538.5 705.6 543.3 706.0 C548.1 706.4 555.8 705.7 560.0 706.0 C564.2 706.3 569.9 707.3 574.7 708.0 C579.5 708.7 590.4 710.6 595.7 710.9 C601.0 711.2 608.6 710.5 614.7 710.0 C620.8 709.5 634.8 707.6 641.4 707.0 C648.0 706.4 658.6 705.8 664.2 705.2 C669.8 704.6 678.9 702.9 683.3 702.3 C687.7 701.7 693.6 701.6 697.0 701.0 C700.4 700.4 706.4 699.2 709.0 698.0 C711.6 696.8 715.7 695.1 716.6 692.0 C717.5 688.9 715.7 679.3 716.0 675.0 C716.3 670.7 718.5 664.0 718.6 660.0 C718.7 656.0 717.6 648.3 716.6 644.7 C715.6 641.1 712.5 635.5 711.0 633.3 C709.5 631.1 708.0 629.2 705.2 628.5 C702.4 627.8 692.9 628.1 690.0 628.0 C687.1 627.9 686.7 627.6 683.3 628.0 C679.9 628.4 669.5 629.7 664.2 631.0 C658.9 632.3 649.6 637.3 643.3 638.0 C637.0 638.7 623.2 636.9 616.6 636.6 C610.0 636.3 600.1 635.9 593.8 636.0 C587.5 636.1 574.8 638.1 569.0 637.6 C563.2 637.1 555.0 633.0 550.0 631.9 C545.0 630.8 536.5 629.5 531.8 629.0 C527.1 628.5 518.8 628.5 514.7 628.0 C510.6 627.5 505.7 626.8 501.4 625.2 C497.1 623.6 486.9 617.6 482.3 615.7 C477.7 613.8 471.6 612.2 467.0 611.0 C462.4 609.8 452.6 608.7 448.0 607.0 C443.4 605.3 436.3 601.0 432.8 598.6 C429.3 596.2 424.4 590.9 421.4 589.0 C418.4 587.1 412.9 585.4 410.0 584.3 C407.1 583.2 402.9 582.7 399.4 580.4 C395.9 578.1 388.1 570.5 384.0 567.0 C379.9 563.5 372.8 556.6 369.0 553.8 C365.2 551.0 358.8 548.8 355.7 546.0 C352.6 543.2 348.5 536.3 346.0 532.8 C343.5 529.3 339.1 522.5 336.6 519.5 C334.1 516.5 329.1 512.4 327.0 510.0 C324.9 507.6 322.2 504.9 320.7 501.8 C319.2 498.7 317.7 490.7 316.0 486.6 C314.3 482.5 310.2 475.5 308.3 471.4 C306.4 467.3 302.6 461.8 301.6 456.0 C300.6 450.2 301.4 433.3 300.7 427.6 C300.0 421.9 298.3 415.6 296.0 413.3 C293.7 411.0 287.1 410.6 283.5 410.5 C279.9 410.4 271.4 410.1 269.3 412.4Z" fill="none" stroke="#000" stroke-width="1"/>
<path d="M422.5 589.5 C414 596 406 603 403.5 613 C402 620 406.6 625 406.6 631 C406.5 640 406 650 406 658.7" fill="none" stroke="#000" stroke-width="0.9"/>
<path d="M272 462 Q278 485 284.5 503.7" fill="none" stroke="#000" stroke-width="0.8"/>
<path d="M711.0 623.8 L757.6 607.6 L763.3 615.2 L714.7 630.4Z" fill="#b8c838" stroke="#000" stroke-width="1"/>
<path d="M714.7 630.4 L763.3 615.2 L766.0 675.2 L719.5 692.3Z" fill="#c9b880" stroke="#000" stroke-width="1"/>
<path d="M715.5 631.0 L763.0 616.0 L765.0 633.0 L718.6 644.7Z" fill="#f0e0a8" stroke="none"/>
<path d="M718 644.5 Q740 636 765 633" fill="none" stroke="#000" stroke-width="0.8" stroke-dasharray="2 1.5"/>
<path d="M719 636 L761 622 M720 650 L720 688 M761 622 L763 670" fill="none" stroke="#000" stroke-width="0.8" stroke-dasharray="2 1.5"/>
<path d="M922.8 201.4 C925.3 201.4 930.6 202.3 932.3 203.3 C934.0 204.3 934.8 207.0 935.2 209.0 C935.6 211.0 935.6 211.0 935.2 218.6 C934.8 226.2 933.4 249.8 932.3 266.0 C931.2 282.2 928.1 323.9 926.6 340.0 C925.1 356.1 922.4 372.1 921.0 387.0 C919.6 401.9 916.9 441.3 916.0 451.8 C915.1 462.3 915.3 463.0 914.0 466.0 C912.7 469.0 908.4 472.8 906.0 474.0 C903.6 475.2 898.1 475.3 896.0 475.0 C893.9 474.7 891.6 472.9 890.0 472.0 C888.4 471.1 885.5 469.9 884.0 468.0 C882.5 466.1 879.9 461.2 879.0 458.0 C878.1 454.8 877.0 453.7 877.0 444.2 C877.0 434.7 878.2 400.9 879.0 387.0 C879.8 373.1 881.8 353.6 882.8 340.0 C883.8 326.4 885.7 297.6 886.7 285.2 C887.7 272.8 889.5 255.2 890.5 247.1 C891.5 239.0 892.8 228.9 894.3 224.3 C895.8 219.7 899.9 215.0 901.9 212.8 C903.9 210.6 908.0 209.3 909.5 208.0 C911.0 206.7 911.5 204.2 913.3 203.3 C915.1 202.4 920.3 201.4 922.8 201.4Z" fill="url(#gCush)" stroke="#000" stroke-width="1"/>
<path d="M910.4 209 C906 260 902 320 900 340 C897 390 893 430 892.4 470" fill="none" stroke="#000" stroke-width="0.9"/>
<ellipse cx="916" cy="325" rx="3" ry="70" transform="rotate(2 916 325)" fill="#fff" opacity="0.95" filter="url(#fb2)"/>
<path d="M935.2 216.0 L944.0 211.5 L940.0 266.0 L936.0 340.0 L930.0 400.0 L925.5 460.0 L917.0 461.0 L916.0 451.8 L921.0 387.0 L926.6 340.0 L932.3 266.0Z" fill="#f0d49a" stroke="#000" stroke-width="1"/>
<path d="M944.0 212.0 C944.8 206.3 946.1 209.2 948.0 209.0 C949.9 208.8 960.4 209.2 963.0 210.0 C965.6 210.8 972.5 215.3 974.0 216.7 C975.5 218.1 977.0 221.3 978.0 224.3 C979.0 227.3 982.9 244.1 983.7 247.0 C984.5 249.9 986.1 247.7 986.0 253.0 C985.9 258.3 983.4 291.3 983.0 300.0 C982.6 308.7 982.1 327.0 982.0 340.0 C981.9 353.0 984.2 419.5 982.0 430.0 C979.8 440.5 963.7 442.5 960.0 445.0 C956.3 447.5 948.5 453.5 945.0 455.0 C941.5 456.5 927.0 465.5 925.5 460.0 C924.0 454.5 929.0 412.0 930.0 400.0 C931.0 388.0 935.0 353.4 936.0 340.0 C937.0 326.6 939.2 278.8 940.0 266.0 C940.8 253.2 943.2 217.7 944.0 212.0Z" fill="url(#gHous2)" stroke="#000" stroke-width="1"/>
<path d="M947.6 210 L938 340 L932 455" fill="none" stroke="#000" stroke-width="0.9"/>
<path d="M978 224 L972.3 330 L966.6 406" fill="none" stroke="#000" stroke-width="0.9"/>
<path d="M973 330 L982 330 L982 425 L964 425 L966.6 406Z" fill="#5ea880" opacity="0.8"/>
<path d="M983.0 290.0 L998.0 292.0 L997.0 330.0 L991.4 425.0 L986.0 482.0 L975.0 482.0 L981.0 402.0 L982.0 330.0Z" fill="#66c4f0" stroke="#000" stroke-width="1"/>
<path d="M993 300 L988 425 L984 480" fill="none" stroke="#000" stroke-width="0.8" stroke-dasharray="2 2"/>
<path d="M997.0 352.8 L1006.6 358.5 L1004.7 419.5 L993.3 427.0Z" fill="#7a9a48" stroke="#000" stroke-width="1"/>
<path d="M980.0 253.0 C981.3 249.9 986.9 257.7 989.0 262.0 C991.1 266.3 994.9 278.6 996.0 285.0 C997.1 291.4 997.5 303.2 997.0 310.0 C996.5 316.8 993.5 331.7 992.0 336.0 C990.5 340.3 987.5 344.1 986.0 342.0 C984.5 339.9 981.9 327.6 981.0 320.0 C980.1 312.4 979.1 293.9 979.0 285.0 C978.9 276.1 978.7 256.1 980.0 253.0Z" fill="#2a4ad8" stroke="#000" stroke-width="1"/>
<path d="M985 265 Q993 295 988 330" fill="none" stroke="#000" stroke-width="0.7" stroke-dasharray="1.5 1.5"/>
<path d="M953.5 452.0 L988.5 448.0 L987.0 479.0 L981.0 488.0 L970.0 492.0Z" fill="#60bce8" stroke="#000" stroke-width="0.9"/>
<path d="M962 462 Q975 470 980 486" fill="none" stroke="#a8e4ff" stroke-width="4" opacity="0.8" filter="url(#fb1)"/>
<path d="M936.7 426 L935.3 445.8 Q945 454 953.5 454.2 Q975 454 985.6 450 L985.6 425Z" fill="#86b466" stroke="#000" stroke-width="1"/>
<path d="M953.5 454.2 Q975 454 985.6 450 L985.6 425 L962 425 Z" fill="#5cb4e4"/>
<path d="M953.5 438 Q975 441 985.6 436" fill="none" stroke="#000" stroke-width="0.9"/>
<path d="M957 443 Q972 446 982 442" fill="none" stroke="#9ad8f8" stroke-width="3" opacity="0.8" filter="url(#fb1)"/>
<ellipse cx="961.2" cy="425.6" rx="24.6" ry="16" fill="#98c474" stroke="#000" stroke-width="1"/>
<path d="M967.4 410 A24.6 16 0 0 1 985.8 425.6 A24.6 16 0 0 1 953 440.8 Z" fill="#66c0f0"/>
<ellipse cx="961.2" cy="425.6" rx="24.6" ry="16" fill="none" stroke="#000" stroke-width="1"/>
<ellipse cx="962" cy="424" rx="18" ry="11.5" fill="none" stroke="#000" stroke-width="0.9"/>
<path d="M967.4 410.5 L953.5 454.2" fill="none" stroke="#000" stroke-width="0.9"/>
<path d="M757.6 607.6 C760.2 605.1 779.2 596.9 785.4 593.6 C791.6 590.3 805.6 582.6 810.8 579.6 C816.0 576.6 825.7 570.8 830.0 568.0 C834.3 565.2 843.6 558.5 847.8 555.6 C852.0 552.7 861.5 546.2 865.6 543.0 C869.7 539.8 879.6 531.7 883.3 528.0 C887.0 524.3 893.7 515.8 897.0 511.0 C900.3 506.2 908.5 492.2 911.4 487.0 C914.3 481.8 919.8 470.1 921.5 466.0 C923.2 461.9 921.9 453.2 925.6 452.0 C929.3 450.8 948.8 454.7 953.5 455.6 C958.2 456.5 963.4 458.2 966.0 460.0 C968.6 461.8 974.3 468.7 975.8 471.0 C977.3 473.3 978.3 477.3 978.6 479.3 C978.9 481.3 979.1 485.0 978.4 488.0 C977.7 491.0 974.2 501.1 972.3 505.0 C970.4 508.9 965.6 517.9 962.0 521.2 C958.4 524.5 945.4 531.1 941.8 533.4 C938.2 535.7 933.1 539.5 931.3 541.3 C929.5 543.0 927.9 545.7 926.0 548.4 C924.1 551.1 918.2 560.2 915.3 564.4 C912.4 568.6 904.7 579.4 901.0 584.0 C897.3 588.6 887.4 599.4 883.3 603.6 C879.2 607.8 869.7 616.3 865.6 619.6 C861.5 622.9 852.0 629.3 847.8 632.0 C843.6 634.7 834.0 640.3 830.0 642.7 C826.0 645.1 819.0 649.4 813.7 652.3 C808.5 655.2 790.6 664.9 785.0 667.6 C779.4 670.3 768.5 681.3 766.0 675.2 C763.5 669.1 764.3 623.1 763.3 615.2 C762.3 607.3 755.0 610.1 757.6 607.6Z" fill="#b45e4e" stroke="#000" stroke-width="1"/>
<path d="M763.0 615.5 C762.2 613.3 755.4 609.8 757.6 607.6 C759.8 605.4 780.1 596.4 785.4 593.6 C790.7 590.8 806.3 582.2 810.8 579.6 C815.3 577.0 826.3 570.4 830.0 568.0 C833.7 565.6 844.2 558.1 847.8 555.6 C851.4 553.1 862.1 545.8 865.6 543.0 C869.1 540.2 880.2 531.2 883.3 528.0 C886.4 524.8 894.2 515.1 897.0 511.0 C899.8 506.9 908.9 491.5 911.4 487.0 C913.9 482.5 920.1 469.5 921.5 466.0 C922.9 462.5 922.4 453.0 925.6 452.0 C928.8 451.0 951.5 451.3 953.5 455.6 C955.5 459.9 947.9 489.4 946.0 495.0 C944.1 500.6 937.7 508.6 935.0 512.0 C932.3 515.4 922.4 525.7 919.0 529.0 C915.6 532.3 904.6 542.0 901.0 545.0 C897.4 548.0 886.8 556.2 883.3 559.0 C879.8 561.8 869.1 570.4 865.6 573.3 C862.1 576.2 851.4 585.1 847.8 587.6 C844.2 590.1 835.0 595.2 830.0 598.0 C825.0 600.8 804.4 612.8 798.0 616.0 C791.6 619.2 769.5 630.0 766.0 630.0 C762.5 630.0 763.8 617.7 763.0 615.5Z" fill="#ec7e6c" stroke="none"/>
<clipPath id="cRB"><path d="M757.6 607.6 C760.2 605.1 779.2 596.9 785.4 593.6 C791.6 590.3 805.6 582.6 810.8 579.6 C816.0 576.6 825.7 570.8 830.0 568.0 C834.3 565.2 843.6 558.5 847.8 555.6 C852.0 552.7 861.5 546.2 865.6 543.0 C869.7 539.8 879.6 531.7 883.3 528.0 C887.0 524.3 893.7 515.8 897.0 511.0 C900.3 506.2 908.5 492.2 911.4 487.0 C914.3 481.8 919.8 470.1 921.5 466.0 C923.2 461.9 921.9 453.2 925.6 452.0 C929.3 450.8 948.8 454.7 953.5 455.6 C958.2 456.5 963.4 458.2 966.0 460.0 C968.6 461.8 974.3 468.7 975.8 471.0 C977.3 473.3 978.3 477.3 978.6 479.3 C978.9 481.3 979.1 485.0 978.4 488.0 C977.7 491.0 974.2 501.1 972.3 505.0 C970.4 508.9 965.6 517.9 962.0 521.2 C958.4 524.5 945.4 531.1 941.8 533.4 C938.2 535.7 933.1 539.5 931.3 541.3 C929.5 543.0 927.9 545.7 926.0 548.4 C924.1 551.1 918.2 560.2 915.3 564.4 C912.4 568.6 904.7 579.4 901.0 584.0 C897.3 588.6 887.4 599.4 883.3 603.6 C879.2 607.8 869.7 616.3 865.6 619.6 C861.5 622.9 852.0 629.3 847.8 632.0 C843.6 634.7 834.0 640.3 830.0 642.7 C826.0 645.1 819.0 649.4 813.7 652.3 C808.5 655.2 790.6 664.9 785.0 667.6 C779.4 670.3 768.5 681.3 766.0 675.2 C763.5 669.1 764.3 623.1 763.3 615.2 C762.3 607.3 755.0 610.1 757.6 607.6Z"/></clipPath>
<g clip-path="url(#cRB)"><path d="M766 630 Q800 616 830 598 Q866 573 901 545 Q930 515 944 495" fill="none" stroke="#d06c5c" stroke-width="6" opacity="0.7" filter="url(#fb2)"/></g>
<path d="M757.6 607.6 C760.2 605.1 779.2 596.9 785.4 593.6 C791.6 590.3 805.6 582.6 810.8 579.6 C816.0 576.6 825.7 570.8 830.0 568.0 C834.3 565.2 843.6 558.5 847.8 555.6 C852.0 552.7 861.5 546.2 865.6 543.0 C869.7 539.8 879.6 531.7 883.3 528.0 C887.0 524.3 893.7 515.8 897.0 511.0 C900.3 506.2 908.5 492.2 911.4 487.0 C914.3 481.8 919.8 470.1 921.5 466.0 C923.2 461.9 921.9 453.2 925.6 452.0 C929.3 450.8 948.8 454.7 953.5 455.6 C958.2 456.5 963.4 458.2 966.0 460.0 C968.6 461.8 974.3 468.7 975.8 471.0 C977.3 473.3 978.3 477.3 978.6 479.3 C978.9 481.3 979.1 485.0 978.4 488.0 C977.7 491.0 974.2 501.1 972.3 505.0 C970.4 508.9 965.6 517.9 962.0 521.2 C958.4 524.5 945.4 531.1 941.8 533.4 C938.2 535.7 933.1 539.5 931.3 541.3 C929.5 543.0 927.9 545.7 926.0 548.4 C924.1 551.1 918.2 560.2 915.3 564.4 C912.4 568.6 904.7 579.4 901.0 584.0 C897.3 588.6 887.4 599.4 883.3 603.6 C879.2 607.8 869.7 616.3 865.6 619.6 C861.5 622.9 852.0 629.3 847.8 632.0 C843.6 634.7 834.0 640.3 830.0 642.7 C826.0 645.1 819.0 649.4 813.7 652.3 C808.5 655.2 790.6 664.9 785.0 667.6 C779.4 670.3 768.5 681.3 766.0 675.2 C763.5 669.1 764.3 623.1 763.3 615.2 C762.3 607.3 755.0 610.1 757.6 607.6Z" fill="none" stroke="#000" stroke-width="1"/>
<path d="M760.3 613.0 C764.9 610.6 779.3 603.6 788.2 598.9 C797.1 594.2 806.3 589.1 813.8 584.8 C821.3 580.5 827.0 577.1 833.3 573.0 C839.5 569.0 845.2 564.7 851.2 560.5 C857.3 556.3 863.2 552.5 869.3 547.7 C875.3 543.0 882.1 537.8 887.6 532.2 C893.0 526.6 897.1 521.4 901.9 514.4 C906.8 507.3 912.5 497.6 916.7 489.9 C920.9 482.2 924.6 474.3 927.1 468.3 C929.5 462.2 930.6 456.1 931.4 453.7" fill="none" stroke="#000" stroke-width="0.9" stroke-dasharray="2 2"/>
<path d="M763.9 620.1 C768.6 617.8 782.9 610.7 791.9 606.0 C800.9 601.3 810.2 596.1 817.8 591.7 C825.4 587.4 831.3 583.9 837.6 579.7 C844.0 575.6 849.8 571.3 855.8 567.1 C861.9 562.8 868.0 558.9 874.2 554.1 C880.4 549.2 887.6 543.7 893.3 537.8 C899.0 531.9 903.5 526.3 908.5 518.9 C913.6 511.6 919.4 501.6 923.7 493.7 C928.0 485.8 931.9 477.6 934.5 471.3 C937.0 465.0 938.3 458.5 939.0 455.9" fill="none" stroke="#000" stroke-width="0.9" stroke-dasharray="2 2"/>
<path d="M769.0 670.0 C774.2 667.8 789.8 662.3 800.0 657.0 C810.2 651.7 819.1 645.2 830.0 638.0 C840.9 630.8 854.3 623.3 865.6 614.0 C876.9 604.7 890.3 590.5 898.0 582.0 C905.7 573.5 907.7 569.5 912.0 563.0 C916.3 556.5 922.0 546.3 924.0 543.0" fill="none" stroke="#000" stroke-width="0.9" stroke-dasharray="2 2"/>
<path d="M766.0 628.0 C771.3 625.7 787.3 619.3 798.0 614.0 C808.7 608.7 818.7 603.2 830.0 596.0 C841.3 588.8 853.8 579.8 865.6 571.0 C877.4 562.2 892.1 550.3 901.0 543.0 C909.9 535.7 912.5 534.2 919.0 527.0 C925.5 519.8 936.5 504.5 940.0 500.0" fill="none" stroke="#000" stroke-width="0.8" stroke-dasharray="2 2"/>
<path d="M953.5 458 Q950 475 944 490" fill="none" stroke="#000" stroke-width="0.9"/>
<path d="M953.0 458.0 C955.0 457.1 962.3 463.6 965.0 466.0 C967.7 468.4 974.5 476.4 976.0 479.0 C977.5 481.6 978.2 485.2 978.0 488.0 C977.8 490.8 975.3 500.1 974.0 503.0 C972.7 505.9 968.9 510.2 967.0 513.0 C965.1 515.8 960.6 524.2 958.0 527.0 C955.4 529.8 947.7 535.4 945.0 537.0 C942.3 538.6 935.4 543.0 935.0 541.0 C934.6 539.0 941.0 524.8 942.0 520.0 C943.0 515.2 943.3 505.4 944.0 500.0 C944.7 494.6 947.0 478.9 948.0 474.0 C949.0 469.1 951.0 458.9 953.0 458.0Z" fill="#ee8272" stroke="#000" stroke-width="1"/>
<path d="M944 486 Q958 488 967 502 M946 492 Q958 494 964 508" fill="none" stroke="#000" stroke-width="0.8" stroke-dasharray="1.6 1.6"/>
<path d="M962 470 Q975 485 970 505" fill="none" stroke="#c86a5a" stroke-width="4" opacity="0.6" filter="url(#fb2)"/>
<path d="M921.5 540.0 C920.4 538.3 924.5 529.7 926.0 526.0 C927.5 522.3 930.9 515.2 933.0 512.0 C935.1 508.8 939.6 503.9 942.0 502.0 C944.4 500.1 948.7 498.1 951.0 498.0 C953.3 497.9 957.5 499.5 959.0 501.0 C960.5 502.5 962.1 506.3 962.0 509.0 C961.9 511.7 960.0 517.9 958.0 521.0 C956.0 524.1 950.2 529.6 947.0 532.0 C943.8 534.4 937.4 537.9 934.0 539.0 C930.6 540.1 922.6 541.7 921.5 540.0Z" fill="#b4cdea" stroke="#000" stroke-width="1"/>
<path d="M926 530 Q935 510 952 502" fill="none" stroke="#fff" stroke-width="3" opacity="0.9" filter="url(#fb1)"/>
<path d="M935 538 Q952 528 960 510" fill="none" stroke="#8aa8d0" stroke-width="3" opacity="0.7" filter="url(#fb1)"/>
</svg>
<svg class="a" style="left:0;top:0" width="1068" height="788">
<defs>
<linearGradient id="tbBlue" x1="0" y1="0" x2="0" y2="1"><stop offset="0" stop-color="#cfe6ff"/><stop offset="1" stop-color="#5c9ee6"/></linearGradient>
<linearGradient id="tbBlue2" x1="0" y1="0" x2="1" y2="1"><stop offset="0" stop-color="#b8d8fa"/><stop offset="1" stop-color="#6aa6ea"/></linearGradient>
</defs>
<!-- 1 magnifier grayed -->
<g transform="translate(501,29)">
 <circle cx="6" cy="6" r="5.2" fill="#e6e6e6" stroke="#c4c4c4" stroke-width="1.6"/>
 <path d="M3.5 5 h5 M3.5 7 h5" stroke="#c8c8c8" stroke-width="1.2"/>
 <path d="M9.8 9.8 L15 15" stroke="#bdbdbd" stroke-width="2.6" stroke-linecap="round"/>
</g>
<!-- 2 move arrows -->
<g transform="translate(524,29)">
 <path d="M8 2 L8 14 M2 8 L14 8" stroke="#4a8ad8" stroke-width="1.6"/>
 <path d="M8 0 L11 3.5 L5 3.5Z M8 16 L11 12.5 L5 12.5Z M0 8 L3.5 5 L3.5 11Z M16 8 L12.5 5 L12.5 11Z" fill="#5a9ae6" stroke="#3a78c8" stroke-width="0.5"/>
</g>
<!-- 3 normal to -->
<g transform="translate(547,29)">
 <path d="M0.5 12.5 L7.5 9.5 L14.5 12.5 L7.5 15.5Z" fill="#9cc8f0" stroke="#5a8ec8" stroke-width="0.8"/>
 <path d="M7.5 12.5 L7.5 2" stroke="#444" stroke-width="1.2"/>
 <path d="M5 4 L7.5 0.5 L10 4Z" fill="#444"/>
</g>
<!-- 4 section view -->
<g transform="translate(570,29)">
 <path d="M1 3 A7 2.5 0 0 1 15 3 L15 14 A2 1.5 0 0 1 11 14 L11 5 A3 1.5 0 0 0 5 5 L5 14 A2 1.5 0 0 1 1 14Z" fill="#7ab0e8" stroke="#3e6ea8" stroke-width="0.8"/>
 <rect x="1.5" y="4" width="3.5" height="10.5" fill="#f0d040" stroke="#8a6a10" stroke-width="0.6"/>
 <rect x="11" y="4" width="3.5" height="10.5" fill="#f0d040" stroke="#8a6a10" stroke-width="0.6"/>
 <path d="M2 6 l2 1.5 l-2 1.5 l2 1.5 l-2 1.5 M12 6 l2 1.5 l-2 1.5 l2 1.5 l-2 1.5" fill="none" stroke="#8a6a10" stroke-width="0.7"/>
</g>
<!-- 5 cube front shaded -->
<g transform="translate(593,29)" fill="none" stroke="#3a3a3a" stroke-width="1">
 <path d="M5 0.5 L15.5 0.5 L15.5 11 L11 15.5"/>
 <path d="M5 0.5 L0.5 5 M15.5 0.5 L11 5"/>
 <rect x="0.5" y="5" width="10.5" height="10.5" fill="url(#tbBlue)" stroke="#5a8ac8"/>
</g>
<!-- 6 cube hidden lines -->
<g transform="translate(616,29)" fill="none" stroke="#333" stroke-width="1">
 <path d="M5 0.5 L15.5 0.5 L15.5 11 L5 11Z" fill="url(#tbBlue)" stroke="#4a7ab8"/>
 <path d="M0.5 5 L11 5 L11 15.5 L0.5 15.5Z M0.5 5 L5 0.5 M11 5 L15.5 0.5 M11 15.5 L15.5 11 M0.5 15.5 L5 11"/>
</g>
<!-- 7 cube side shaded -->
<g transform="translate(639,29)" fill="none" stroke="#333" stroke-width="1">
 <path d="M11 5 L15.5 0.5 L15.5 11 L11 15.5Z" fill="url(#tbBlue)" stroke="#4a7ab8"/>
 <path d="M0.5 5 L11 5 L11 15.5 L0.5 15.5Z M0.5 5 L5 0.5 L15.5 0.5 M5 0.5 L5 11 L15.5 11 M5 11 L0.5 15.5"/>
</g>
<!-- 8 cube top shaded -->
<g transform="translate(662,29)" fill="none" stroke="#333" stroke-width="1">
 <path d="M0.5 5 L5 0.5 L15.5 0.5 L11 5Z" fill="url(#tbBlue)" stroke="#4a7ab8"/>
 <path d="M0.5 5 L11 5 L11 15.5 L0.5 15.5Z M15.5 0.5 L15.5 11 L11 15.5 M5 0.5 L5 11 L15.5 11 M5 11 L0.5 15.5"/>
</g>
<!-- 9 shaded cube -->
<g transform="translate(686,29)">
 <path d="M7 0.5 L14 3 L14 13 L7 15.5 L0.5 13 L0.5 3Z" fill="url(#tbBlue2)" stroke="#6a9ad8" stroke-width="0.8"/>
 <path d="M0.5 3 L7 5.5 L14 3 M7 5.5 L7 15.5" fill="none" stroke="#8ab8ee" stroke-width="0.8"/>
</g>
<!-- 10 shaded cube 2 -->
<g transform="translate(709,29)">
 <path d="M7.5 0.5 L15 3 L15 13 L7.5 15.5 L0.5 13 L0.5 3Z" fill="url(#tbBlue2)" stroke="#5a8ad0" stroke-width="0.9"/>
 <path d="M0.5 3 L7.5 5.5 L15 3 M7.5 5.5 L7.5 15.5" fill="none" stroke="#5a8ad0" stroke-width="0.8"/>
</g>
<!-- 11 table -->
<g transform="translate(731,29)">
 <rect x="0.5" y="2.5" width="15" height="12" fill="#e8f0fc" stroke="#555" stroke-width="1"/>
 <rect x="1" y="3" width="14" height="2.5" fill="#a8c8f0"/>
 <path d="M0.5 6 h15 M0.5 10 h15 M8 6 v8.5" stroke="#555" stroke-width="1"/>
</g>
<!-- 12 cube w/ red -->
<g transform="translate(754,29)" fill="none" stroke="#444" stroke-width="1">
 <path d="M5 0.5 L15.5 0.5 L15.5 11 L11 15.5 M5 0.5 L0.5 5 M15.5 0.5 L11 5"/>
 <rect x="0.5" y="5" width="10.5" height="10.5" fill="url(#tbBlue)" stroke="#5a8ac8"/>
 <path d="M13 2 v4 M11.5 4.5 L13 6 L14.5 4.5 M16 9 h-4 M13.5 7.5 L12 9 L13.5 10.5" stroke="#e03030" stroke-width="0.9"/>
</g>
<path d="M774 37 L779 37 L776.5 40Z" fill="#5a5e70"/>
<!-- 13 active button -->
<rect x="784.5" y="26.5" width="22" height="22" rx="3" fill="#9fa0ac" stroke="#7c7e8c" stroke-width="1"/>
<g transform="translate(787,30)">
 <path d="M1 6 L7 1 L16 1 L10 6Z" fill="#7ab6f0" stroke="#00103a" stroke-width="1.2"/>
 <path d="M10 6 L16 1 L16 10 L10 15.5Z" fill="#2a6ad0" stroke="#00103a" stroke-width="1.2"/>
 <rect x="1" y="6" width="9" height="9.5" fill="#4aa0f0" stroke="#00103a" stroke-width="1.2"/>
</g>
</svg>

<svg class="a" style="left:0;top:0" width="1068" height="788">
<defs>
 <linearGradient id="gArrG" x1="0" y1="0" x2="1" y2="1"><stop offset="0" stop-color="#70f070"/><stop offset="1" stop-color="#108010"/></linearGradient>
 <linearGradient id="gIcaxBar" x1="0" y1="0" x2="0" y2="1"><stop offset="0" stop-color="#8ad8f8"/><stop offset="0.5" stop-color="#1a9ad8"/><stop offset="1" stop-color="#0a6aa8"/></linearGradient>
 <radialGradient id="gBall" cx="0.35" cy="0.35" r="0.7"><stop offset="0" stop-color="#a0b8ff"/><stop offset="0.5" stop-color="#2040e0"/><stop offset="1" stop-color="#1020a0"/></radialGradient>
</defs>
<!-- axis triad -->
<g>
 <path d="M283.5 729 L263 719" stroke="#c01818" stroke-width="3"/>
 <path d="M261 714 L270 716 L267 722Z" fill="#801010" stroke="#600" stroke-width="1"/>
 <path d="M284 729 L284 712" stroke="#1a1aa0" stroke-width="3"/>
 <path d="M280 714 L284 707 L288 714 L285 713 L283 713Z" fill="#1a1aa8" stroke="#1a1aa8" stroke-width="1.5"/>
 <path d="M284 729 L273 740" stroke="#18901a" stroke-width="3"/>
 <path d="M268 746 L270 738 L276 744Z" fill="url(#gArrG)" stroke="#108010" stroke-width="1"/>
 <path d="M255 708 L259 716 M259 708 L255 716" stroke="#ff2020" stroke-width="1"/>
 <path d="M281 698 L286 698 L281.5 706 L286 706" fill="none" stroke="#2020ff" stroke-width="1"/>
 <path d="M262 744 L265 748 L268 744 M265 748 L265 753" fill="none" stroke="#20e020" stroke-width="1"/>
</g>
<!-- ICAX logo -->
<g>
 <g stroke="#3a2424" stroke-width="3.6" fill="none" opacity="0.75" transform="translate(-1.8,1.2)">
  <path d="M12.6 769 Q16 753 32.3 747"/><path d="M55 745 Q33 751 32.5 767.5 L55.7 767.5"/>
  <path d="M62 768.4 Q68 752 84.2 745.5 L84.2 769 M62 750.7 L84.2 767.8"/><path d="M92 769 Q99 751 117.7 746 M95.4 746 Q114 752 120.3 769"/>
 </g>
 <circle cx="31.6" cy="759" r="7.2" fill="url(#gBall)"/>
 <g stroke="#8ad8f8" stroke-width="3.4" fill="none">
  <path d="M12.6 769 Q16 753 32.3 747"/><path d="M55 745 Q33 751 32.5 767.5 L55.7 767.5"/>
  <path d="M62 768.4 Q68 752 84.2 745.5 L84.2 769 M62 750.7 L84.2 767.8"/><path d="M92 769 Q99 751 117.7 746 M95.4 746 Q114 752 120.3 769"/>
 </g>
 <g stroke="#22a8e4" stroke-width="1.8" fill="none">
  <path d="M12.6 769 Q16 753 32.3 747"/><path d="M55 745 Q33 751 32.5 767.5 L55.7 767.5"/>
  <path d="M62 768.4 Q68 752 84.2 745.5 L84.2 769 M62 750.7 L84.2 767.8"/><path d="M92 769 Q99 751 117.7 746 M95.4 746 Q114 752 120.3 769"/>
 </g>
 <circle cx="38.9" cy="742.9" r="4.8" fill="#ff9a18" stroke="#2a1a10" stroke-width="0.8"/>
 <path d="M37 745 L39 741 M39.5 745 L41.5 741" stroke="#fff" stroke-width="0.9"/>
 <rect x="6.5" y="774.5" width="118" height="6" fill="#3a2424" opacity="0.5"/>
 <rect x="8.5" y="772.8" width="116.5" height="6.4" rx="1" fill="url(#gIcaxBar)"/>
 <text x="66" y="778.8" font-family="Liberation Sans" font-weight="bold" font-style="italic" font-size="7" fill="#fff" text-anchor="middle" letter-spacing="1.6">WWW.ICAX.ORG</text>
</g>
<!-- solidworks watermark -->
<g>
 <ellipse cx="986" cy="757.8" rx="8.4" ry="5.8" fill="#e84010"/>
 <ellipse cx="986" cy="758" rx="5" ry="4.5" fill="#fff"/>
 <path d="M983 760.5 L986 754.5 L989 760.5Z" fill="#1a90e8"/>
 <g stroke="#2a30f0" stroke-width="1.3" fill="none">
  <path d="M999 753 L1001 756 M1004 753 L1002 756 M998 758 L1006 758 M1000 758 L999 764 M1002 758 L1005 764 M1004 760 L1000 764 M1007 753 L1009 756 M1011 753 L1009 756"/>
  <path d="M1016 753 L1014 764 M1019 755 L1025 755 L1025 764 L1023 763 M1019 758 L1022 758 L1022 761 L1019 761Z"/>
 </g>
 <g>
  <path d="M1036 763 L1040 756 L1058 754 L1060 760 L1052 765 L1038 765Z" fill="#2060c0"/>
  <rect x="1041" y="752" width="5" height="3" fill="#d04020"/>
  <circle cx="1047" cy="762" r="2.5" fill="#e07080"/><circle cx="1055" cy="761" r="2.5" fill="#70a030"/>
 </g>
 <text x="976" y="774" font-family="Liberation Sans" font-size="9.5" fill="#ff3a3a" textLength="46" lengthAdjust="spacingAndGlyphs">SolidWorks</text>
 <g stroke="#6a80ff" stroke-width="1" fill="none">
  <path d="M1027 766 L1034 766 M1030.5 765 L1030.5 774 M1027 769 L1034 769 L1034 772 L1027 772Z"/>
  <path d="M1036 766 L1036 774 M1036 766 L1039 766 L1039 770 L1036 770 M1043 766 L1043 774 M1040 766 L1043 766 L1043 770 L1040 770"/>
  <path d="M1045 766 L1047 767 M1045 769 L1047 769 M1045 772 L1047 771 M1048 768 L1051 765 L1053 768 M1048 770 L1053 770 L1053 774 L1048 774Z"/>
  <path d="M1055 766 L1055 774 M1054 769 L1057 769 M1057 767 L1061 767 M1058 769 L1061 769 L1061 774 L1058 774Z"/>
 </g>
 <text x="988" y="781" font-family="Liberation Sans" font-size="7" fill="#202020" textLength="57" lengthAdjust="spacingAndGlyphs">solidworks.org.tw</text>
</g>
</svg>

</body></html>
